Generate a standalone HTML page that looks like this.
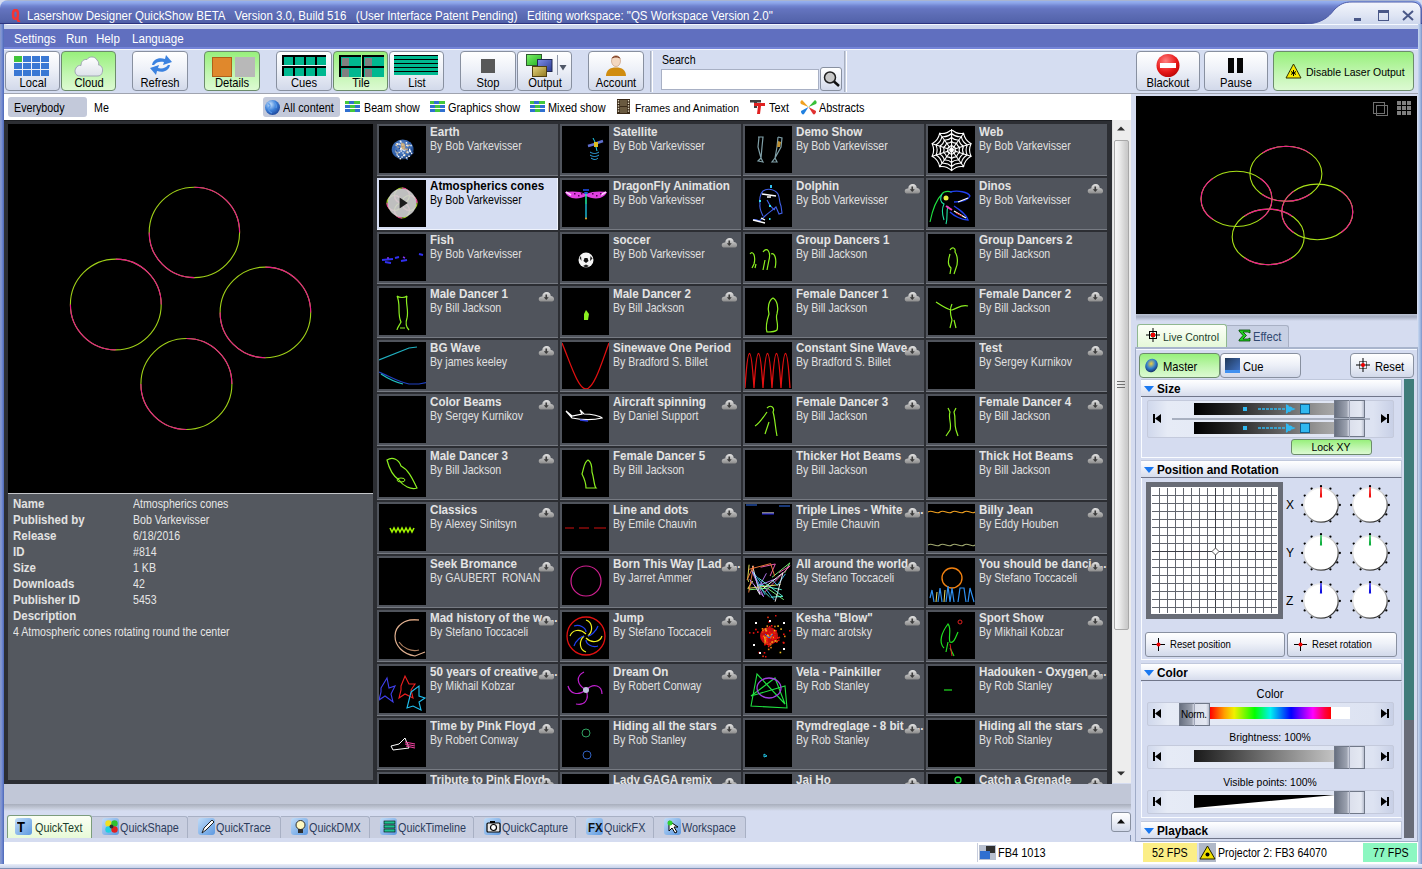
<!DOCTYPE html><html><head><meta charset="utf-8"><style>
*{box-sizing:border-box;margin:0;padding:0}
html,body{width:1422px;height:869px;overflow:hidden;background:#d5dcf0;font-family:"Liberation Sans",sans-serif;font-size:11px;color:#000}
.a{position:absolute}
.t{position:absolute;white-space:pre;line-height:1}
.btn{position:absolute;border:1px solid #8890a0;border-radius:4px;background:linear-gradient(#ffffff,#eef1f8 45%,#d2d9ea);}
.btng{position:absolute;border:1px solid #6c8c6c;border-radius:4px;background:linear-gradient(#98f07c,#c4f6b4 60%,#dcfad2);}
.lbl{position:absolute;left:0;right:0;text-align:center;font-size:11.6px;line-height:1;white-space:pre}
.cell{position:absolute;width:181px;height:52px;background:#50545c;overflow:hidden;border-bottom:1px solid #767a82}
.cell .th{position:absolute;left:2px;top:2px;width:47px;height:47px;background:#000;overflow:hidden}
.cell .ti{position:absolute;left:53px;top:1.97px;font-weight:bold;font-size:12.5px;transform:scaleX(0.928);transform-origin:0 0;color:#e4e4e4;white-space:pre;line-height:1}
.cell .by{position:absolute;left:53px;top:16.73px;font-size:11.9px;transform:scaleX(0.891);transform-origin:0 0;color:#e0e0e0;white-space:pre;line-height:1}
.cell .cl{position:absolute;left:161px;top:5.3px;width:16.5px;height:11px}
.sel{background:#d5ddf2;border-bottom-color:#eef2fc;box-shadow:inset -1px 0 0 #eef2fc}
.sel .ti,.sel .by{color:#000}
.hdr{position:absolute;left:1141px;width:261px;height:18px;border:1px solid #c0c8dc;border-left:none;border-bottom:1px solid #70768a;background:linear-gradient(#ffffff,#f0f3fa 40%,#d6dcec);}
.hdr span{position:absolute;left:15.7px;top:2.93px;font-weight:bold;font-size:12.6px;transform:scaleX(0.936);transform-origin:0 0;white-space:pre;line-height:1}
.hdr i{position:absolute;left:3px;top:6px;width:0;height:0;border-left:5px solid transparent;border-right:5px solid transparent;border-top:6px solid #1a78f0}
.sfr{position:absolute;border:1px solid #c4cadc;border-radius:2px;background:linear-gradient(90deg,#d0d8ec,#e6ebf6 8%,#dde3f2 92%,#c8d0e6)}
</style></head><body><div class="a" style="left:0px;top:0px;width:1422px;height:869px;background:#d5dcf0"></div><div class="a" style="left:0;top:0;width:1422px;height:24px;border-radius:8px 8px 0 0;background:linear-gradient(#a8b4d0 0px,#a8b4d0 1px,#94b0f0 1px,#8ca4e8 3px,#7084d0 6px,#6474c0 9px,#5c6cb4 15px,#5464ac 21px,#4c5ca4 23px,#2c3480 23px,#2c3480 24px)"></div><svg class="a" style="left:1290px;top:0" width="132" height="29"><defs><linearGradient id="wc" x1="0" y1="0" x2="0" y2="1"><stop offset="0" stop-color="#f4f6fc"/><stop offset="0.5" stop-color="#dfe5f4"/><stop offset="1" stop-color="#c4d0ea"/></linearGradient></defs><path d="M0,29 L0,24 L14,24 C30,24 38,18 44,10 C50,4 54,2 62,2 L122,2 C128,2 131,6 131,10 L131,29 Z" fill="url(#wc)" stroke="#4e5ca8" stroke-width="1"/></svg><div class="a" style="left:1354px;top:18px;width:7px;height:3px;background:#4a5888"></div><div class="a" style="left:1378px;top:10px;width:11px;height:11px;border:1px solid #4a5888;border-top-width:3px"></div><svg class="a" style="left:1401px;top:9px" width="14" height="13"><path d="M2,2 L12,11 M12,2 L2,11" stroke="#4a5888" stroke-width="2"/></svg><svg class="a" style="left:11px;top:8px" width="11" height="15"><path d="M4.5,1 C1.5,1 0.8,3 0.8,6.5 C0.8,10 1.5,12 4.5,12 C7.5,12 8.2,10 8.2,6.5 C8.2,3 7.5,1 4.5,1 Z M4.5,3.5 C3.5,3.5 3.3,4.5 3.3,6.5 C3.3,8.5 3.5,9.5 4.5,9.5 C5.5,9.5 5.7,8.5 5.7,6.5 C5.7,4.5 5.5,3.5 4.5,3.5 Z" fill="#f43434" fill-rule="evenodd"/><path d="M4.5,10 L7,10 L9.5,14 L6.5,14 Z" fill="#f43434"/></svg><div class="t" style="left:26.6px;top:9.85px;font-size:12.88px;transform:scaleX(0.8929);transform-origin:0 0;color:#fff">Lasershow Designer QuickShow BETA   Version 3.0, Build 516   (User Interface Patent Pending)   Editing workspace: "QS Workspace Version 2.0"</div><div class="a" style="left:4px;top:24px;width:1414px;height:5px;border-radius:4px 0 0 0;background:linear-gradient(#f4f8ff 0px,#f4f8ff 1px,#ccd6ee 1px,#c8d2ea 5px)"></div><div class="a" style="left:4px;top:29px;width:1414px;height:18px;background:#606fbf"></div><div class="a" style="left:4px;top:47px;width:1414px;height:2px;background:#7484d8"></div><div class="a" style="left:4px;top:49px;width:1414px;height:1px;background:#f4f6fb"></div><div class="t" style="left:14px;top:31.95px;font-size:12.99px;transform:scaleX(0.8929);transform-origin:0 0;color:#fff">Settings</div><div class="t" style="left:66px;top:31.95px;font-size:12.99px;transform:scaleX(0.8929);transform-origin:0 0;color:#fff">Run</div><div class="t" style="left:96px;top:31.95px;font-size:12.99px;transform:scaleX(0.8929);transform-origin:0 0;color:#fff">Help</div><div class="t" style="left:132px;top:31.95px;font-size:12.99px;transform:scaleX(0.8929);transform-origin:0 0;color:#fff">Language</div><div class="a" style="left:0px;top:24px;width:4px;height:840px;background:linear-gradient(90deg,#8c9cc8,#7a90d4 40%,#4c68b8)"></div><div class="a" style="left:1418px;top:24px;width:4px;height:840px;background:linear-gradient(90deg,#c8d8f0,#a0b8e0 60%,#7c90c8)"></div><div class="a" style="left:0px;top:865px;width:1422px;height:4px;background:linear-gradient(#c0cce8,#8898c8)"></div><div class="a" style="left:4px;top:50px;width:1414px;height:43px;background:#d5ddf1"></div><div class="a" style="left:4px;top:93px;width:1414px;height:1px;background:#a0a4b0"></div><div class="btn" style="left:5px;top:51px;width:55px;height:40px"></div><div class="a" style="left:14px;top:56px;width:8px;height:6px;background:#3fc43a"></div><div class="a" style="left:23px;top:56px;width:8px;height:6px;background:#3a78d4"></div><div class="a" style="left:32px;top:56px;width:8px;height:6px;background:#3a78d4"></div><div class="a" style="left:41px;top:56px;width:8px;height:6px;background:#3a78d4"></div><div class="a" style="left:14px;top:63px;width:8px;height:6px;background:#3a78d4"></div><div class="a" style="left:23px;top:63px;width:8px;height:6px;background:#3a78d4"></div><div class="a" style="left:32px;top:63px;width:8px;height:6px;background:#3a78d4"></div><div class="a" style="left:41px;top:63px;width:8px;height:6px;background:#3a78d4"></div><div class="a" style="left:14px;top:70px;width:8px;height:6px;background:#3a78d4"></div><div class="a" style="left:23px;top:70px;width:8px;height:6px;background:#3a78d4"></div><div class="a" style="left:32px;top:70px;width:8px;height:6px;background:#3a78d4"></div><div class="a" style="left:41px;top:70px;width:8px;height:6px;background:#3a78d4"></div><div class="t" style="left:-67.5px;width:200px;text-align:center;top:76.98px;font-size:12.54px;transform:scaleX(0.8929);transform-origin:50% 0;">Local</div><div class="btng" style="left:61px;top:51px;width:55px;height:40px"></div><svg class="a" style="left:74px;top:55px" width="30" height="22"><defs><linearGradient id="cg" x1="0" y1="0" x2="0" y2="1"><stop offset="0" stop-color="#ffffff"/><stop offset="1" stop-color="#dde2ea"/></linearGradient></defs><path d="M6,21 C1,21 0,16 2,13 C3,11 5,10 7,10.5 C7,6 10,4 13,4.5 C15,1 21,1 23,5 C25,7 25,9 24.5,10 C27,10 29,13 28.5,16 C28,20 26,21 23,21 Z" fill="url(#cg)" stroke="#a0a8b4" stroke-width="1"/></svg><div class="t" style="left:-11.5px;width:200px;text-align:center;top:76.98px;font-size:12.54px;transform:scaleX(0.8929);transform-origin:50% 0;">Cloud</div><div class="btn" style="left:132px;top:51px;width:56px;height:40px"></div><svg class="a" style="left:148px;top:53px" width="26" height="24"><path d="M4,12 C5,6 11,4 17,6 L18,2 L24,9 L15,12 L16,9 C12,8 8,9 6,12 Z" fill="#3b82e0"/><path d="M22,12 C21,18 15,20 9,18 L8,22 L2,15 L11,12 L10,15 C14,16 18,15 20,12 Z" fill="#3b82e0"/></svg><div class="t" style="left:60.0px;width:200px;text-align:center;top:76.98px;font-size:12.54px;transform:scaleX(0.8929);transform-origin:50% 0;">Refresh</div><div class="btng" style="left:204px;top:51px;width:56px;height:40px"></div><div class="a" style="left:212px;top:57px;width:20px;height:20px;background:#e0882c;border:1px solid #b06018"></div><div class="a" style="left:235px;top:57px;width:20px;height:20px;background:#b8b8b8"></div><div class="t" style="left:132.0px;width:200px;text-align:center;top:76.98px;font-size:12.54px;transform:scaleX(0.8929);transform-origin:50% 0;">Details</div><div class="btn" style="left:276px;top:51px;width:56px;height:40px"></div><div class="a" style="left:282px;top:55px;width:11px;height:10px;background:#00b890;border-left:2px solid #000;border-top:2px solid #000"></div><div class="a" style="left:293px;top:55px;width:11px;height:10px;background:#00b890;border-left:2px solid #000;border-top:2px solid #000"></div><div class="a" style="left:304px;top:55px;width:11px;height:10px;background:#00b890;border-left:2px solid #000;border-top:2px solid #000"></div><div class="a" style="left:315px;top:55px;width:11px;height:10px;background:#00b890;border-left:2px solid #000;border-top:2px solid #000"></div><div class="a" style="left:282px;top:66px;width:11px;height:10px;background:#00b890;border-left:2px solid #000;border-top:2px solid #000"></div><div class="a" style="left:293px;top:66px;width:11px;height:10px;background:#00b890;border-left:2px solid #000;border-top:2px solid #000"></div><div class="a" style="left:304px;top:66px;width:11px;height:10px;background:#00b890;border-left:2px solid #000;border-top:2px solid #000"></div><div class="a" style="left:315px;top:66px;width:11px;height:10px;background:#00b890;border-left:2px solid #000;border-top:2px solid #000"></div><div class="t" style="left:204.0px;width:200px;text-align:center;top:76.98px;font-size:12.54px;transform:scaleX(0.8929);transform-origin:50% 0;">Cues</div><div class="btng" style="left:333px;top:51px;width:55px;height:40px"></div><div class="a" style="left:339px;top:55px;width:22px;height:11px;background:#00b890;border-left:2px solid #000;border-top:2px solid #000"><div class="a" style="left:1px;top:1px;width:7px;height:8px;background:#808080"></div></div><div class="a" style="left:362px;top:55px;width:22px;height:11px;background:#00b890;border-left:2px solid #000;border-top:2px solid #000"><div class="a" style="left:1px;top:1px;width:7px;height:8px;background:#808080"></div></div><div class="a" style="left:339px;top:66px;width:22px;height:11px;background:#00b890;border-left:2px solid #000;border-top:2px solid #000"><div class="a" style="left:1px;top:1px;width:7px;height:8px;background:#808080"></div></div><div class="a" style="left:362px;top:66px;width:22px;height:11px;background:#00b890;border-left:2px solid #000;border-top:2px solid #000"><div class="a" style="left:1px;top:1px;width:7px;height:8px;background:#808080"></div></div><div class="t" style="left:260.5px;width:200px;text-align:center;top:76.98px;font-size:12.54px;transform:scaleX(0.8929);transform-origin:50% 0;">Tile</div><div class="btn" style="left:389px;top:51px;width:55px;height:40px"></div><div class="a" style="left:394px;top:55px;width:44px;height:4px;background:#00b890;border-top:1px solid #000"></div><div class="a" style="left:394px;top:59px;width:44px;height:4px;background:#00b890;border-top:1px solid #000"></div><div class="a" style="left:394px;top:63px;width:44px;height:4px;background:#00b890;border-top:1px solid #000"></div><div class="a" style="left:394px;top:67px;width:44px;height:4px;background:#00b890;border-top:1px solid #000"></div><div class="a" style="left:394px;top:71px;width:44px;height:4px;background:#00b890;border-top:1px solid #000"></div><div class="t" style="left:316.5px;width:200px;text-align:center;top:76.98px;font-size:12.54px;transform:scaleX(0.8929);transform-origin:50% 0;">List</div><div class="btn" style="left:460px;top:51px;width:56px;height:40px"></div><div class="a" style="left:481px;top:59px;width:14px;height:14px;background:#585858"></div><div class="t" style="left:388.0px;width:200px;text-align:center;top:76.98px;font-size:12.54px;transform:scaleX(0.8929);transform-origin:50% 0;">Stop</div><div class="btn" style="left:517px;top:51px;width:55px;height:40px"></div><svg class="a" style="left:525px;top:53px" width="45" height="26"><defs><linearGradient id="og1" x1="0" y1="0" x2="1" y2="1"><stop offset="0" stop-color="#7ef06a"/><stop offset="1" stop-color="#20b020"/></linearGradient><linearGradient id="og2" x1="0" y1="0" x2="1" y2="1"><stop offset="0" stop-color="#8090e8"/><stop offset="1" stop-color="#283890"/></linearGradient><linearGradient id="og3" x1="0" y1="0" x2="1" y2="1"><stop offset="0" stop-color="#e8d880"/><stop offset="1" stop-color="#907820"/></linearGradient></defs><rect x="1.5" y="1.5" width="15" height="11" fill="url(#og1)" stroke="#305830"/><rect x="12.5" y="6.5" width="14.5" height="12" fill="url(#og2)" stroke="#202850"/><rect x="7.5" y="13.5" width="14" height="10" fill="url(#og3)" stroke="#504010"/><line x1="32.5" y1="2" x2="32.5" y2="22" stroke="#9098a8"/><path d="M34.5,12 L41.5,12 L38,17.5 Z" fill="#505868"/></svg><div class="t" style="left:444.5px;width:200px;text-align:center;top:76.98px;font-size:12.54px;transform:scaleX(0.8929);transform-origin:50% 0;">Output</div><div class="btn" style="left:588px;top:51px;width:56px;height:40px"></div><svg class="a" style="left:604px;top:53px" width="24" height="24"><ellipse cx="12" cy="8" rx="4.5" ry="5.5" fill="#f4d8c0" stroke="#c09070" stroke-width="0.6"/><path d="M7.5,6 C8,2 16,2 16.5,6 C15,4 9,4 7.5,6 Z" fill="#7a3a20"/><path d="M2,23 C2,17 6,14.5 12,14.5 C18,14.5 22,17 22,23 Z" fill="#d08c10"/></svg><div class="t" style="left:516.0px;width:200px;text-align:center;top:76.98px;font-size:12.54px;transform:scaleX(0.8929);transform-origin:50% 0;">Account</div><div class="a" style="left:650px;top:51px;width:3px;height:41px;border-left:1px solid #a8b0c0;border-right:1px solid #ffffff;background:#c8d0e0"></div><div class="a" style="left:844px;top:51px;width:3px;height:41px;border-left:1px solid #a8b0c0;border-right:1px solid #ffffff;background:#c8d0e0"></div><div class="t" style="left:661.5px;top:54.75px;font-size:11.87px;transform:scaleX(0.8929);transform-origin:0 0;">Search</div><div class="a" style="left:661px;top:69px;width:158px;height:21px;background:#fff;border:1px solid #a8b0c4"></div><div class="btn" style="left:820px;top:67px;width:22px;height:24px;border-radius:3px"></div><svg class="a" style="left:822px;top:70px" width="19" height="18"><circle cx="8" cy="7.5" r="5.5" fill="#c8c8c8" stroke="#202020" stroke-width="1.5"/><path d="M12,11.5 L17,16" stroke="#101010" stroke-width="2.5"/></svg><div class="btn" style="left:1136px;top:51px;width:64px;height:40px"></div><svg class="a" style="left:1155px;top:53px" width="26" height="25"><defs><radialGradient id="bo" cx="0.4" cy="0.3" r="0.8"><stop offset="0" stop-color="#ff8080"/><stop offset="0.6" stop-color="#e81818"/><stop offset="1" stop-color="#b00000"/></radialGradient></defs><circle cx="13" cy="12.5" r="11.5" fill="url(#bo)"/><rect x="5" y="10" width="16" height="5" fill="#fff"/></svg><div class="t" style="left:1068.0px;width:200px;text-align:center;top:76.98px;font-size:12.54px;transform:scaleX(0.8929);transform-origin:50% 0;">Blackout</div><div class="btn" style="left:1204px;top:51px;width:64px;height:40px"></div><svg class="a" style="left:1227px;top:57px" width="18" height="17"><defs><linearGradient id="pz" x1="0" y1="0" x2="1" y2="0"><stop offset="0" stop-color="#000"/><stop offset="0.5" stop-color="#404040"/><stop offset="1" stop-color="#000"/></linearGradient></defs><path d="M1,1 L7,1 L7,16 L1,16 Z M10,1 L16,1 L16,16 L10,16 Z" fill="#050505"/></svg><div class="t" style="left:1136.0px;width:200px;text-align:center;top:76.98px;font-size:12.54px;transform:scaleX(0.8929);transform-origin:50% 0;">Pause</div><div class="btng" style="left:1273px;top:51px;width:141px;height:40px"></div><svg class="a" style="left:1285px;top:63px" width="17" height="16"><path d="M8.5,1 L16,15 L1,15 Z" fill="#f8e800" stroke="#303000" stroke-width="1"/><path d="M8.5,7 L8.5,13 M6,8.5 L11,11.5 M11,8.5 L6,11.5" stroke="#000" stroke-width="1"/></svg><div class="t" style="left:1305.5px;top:66.00px;font-size:11.76px;transform:scaleX(0.8929);transform-origin:0 0;">Disable Laser Output</div><div class="a" style="left:4px;top:94px;width:1127px;height:26px;background:#fff"></div><div class="a" style="left:8px;top:97px;width:79px;height:20px;background:#c3c9da;border-radius:3px"></div><div class="t" style="left:13.5px;top:102.01px;font-size:11.98px;transform:scaleX(0.8929);transform-origin:0 0;">Everybody</div><div class="t" style="left:94px;top:102.01px;font-size:11.98px;transform:scaleX(0.8929);transform-origin:0 0;">Me</div><div class="a" style="left:263px;top:97px;width:77px;height:20px;background:#c3c9da;border-radius:3px"></div><svg class="a" style="left:264px;top:99px" width="17" height="17"><defs><radialGradient id="gl" cx="0.35" cy="0.3" r="0.8"><stop offset="0" stop-color="#c8e4ff"/><stop offset="0.5" stop-color="#3c80d8"/><stop offset="1" stop-color="#183c90"/></radialGradient></defs><circle cx="8.5" cy="8.5" r="7.5" fill="url(#gl)"/><path d="M4,5 C6,4 7,7 5,9 C4,11 6,13 8,14 M10,3 C12,5 13,6 12,9" stroke="#5898e8" stroke-width="1.2" fill="none"/></svg><div class="t" style="left:283px;top:102.01px;font-size:12.21px;transform:scaleX(0.8929);transform-origin:0 0;">All content</div><svg class="a" style="left:345px;top:101px" width="15" height="11"><rect x="0" y="0" width="15" height="3" fill="#44c83c"/><rect x="4" y="0" width="5" height="3" fill="#3070d0"/><rect x="0" y="4" width="15" height="3" fill="#3070d0"/><rect x="5" y="4" width="5" height="3" fill="#44c83c"/><rect x="0" y="8" width="15" height="3" fill="#3070d0"/><rect x="5" y="8" width="5" height="3" fill="#44c83c"/></svg><div class="t" style="left:363.6px;top:102.01px;font-size:11.98px;transform:scaleX(0.8929);transform-origin:0 0;">Beam show</div><svg class="a" style="left:430px;top:101px" width="15" height="11"><rect x="0" y="0" width="15" height="3" fill="#44c83c"/><rect x="4" y="0" width="5" height="3" fill="#3070d0"/><rect x="0" y="4" width="15" height="3" fill="#3070d0"/><rect x="5" y="4" width="5" height="3" fill="#44c83c"/><rect x="0" y="8" width="15" height="3" fill="#3070d0"/><rect x="5" y="8" width="5" height="3" fill="#44c83c"/></svg><div class="t" style="left:448px;top:102.01px;font-size:12.21px;transform:scaleX(0.8929);transform-origin:0 0;">Graphics show</div><svg class="a" style="left:530px;top:101px" width="15" height="11"><rect x="0" y="0" width="15" height="3" fill="#44c83c"/><rect x="4" y="0" width="5" height="3" fill="#3070d0"/><rect x="0" y="4" width="15" height="3" fill="#3070d0"/><rect x="5" y="4" width="5" height="3" fill="#44c83c"/><rect x="0" y="8" width="15" height="3" fill="#3070d0"/><rect x="5" y="8" width="5" height="3" fill="#44c83c"/></svg><div class="t" style="left:548px;top:102.01px;font-size:12.21px;transform:scaleX(0.8929);transform-origin:0 0;">Mixed show</div><svg class="a" style="left:617px;top:99px" width="13" height="15"><rect x="0" y="0" width="13" height="15" fill="#3a2a18"/><rect x="3" y="1" width="7" height="6" fill="#6a5a40"/><rect x="3" y="8" width="7" height="6" fill="#6a5a40"/><rect x="0.8" y="1.0" width="1.4" height="1.4" fill="#e0d8c0"/><rect x="10.8" y="1.0" width="1.4" height="1.4" fill="#e0d8c0"/><rect x="0.8" y="3.6" width="1.4" height="1.4" fill="#e0d8c0"/><rect x="10.8" y="3.6" width="1.4" height="1.4" fill="#e0d8c0"/><rect x="0.8" y="6.2" width="1.4" height="1.4" fill="#e0d8c0"/><rect x="10.8" y="6.2" width="1.4" height="1.4" fill="#e0d8c0"/><rect x="0.8" y="8.8" width="1.4" height="1.4" fill="#e0d8c0"/><rect x="10.8" y="8.8" width="1.4" height="1.4" fill="#e0d8c0"/><rect x="0.8" y="11.4" width="1.4" height="1.4" fill="#e0d8c0"/><rect x="10.8" y="11.4" width="1.4" height="1.4" fill="#e0d8c0"/></svg><div class="t" style="left:634.5px;top:101.99px;font-size:11.65px;transform:scaleX(0.8929);transform-origin:0 0;">Frames and Animation</div><svg class="a" style="left:749px;top:99px" width="17" height="16"><path d="M1,1 L12,1 L12,3.5 L8,3.5 L8,9 L5,9 L5,3.5 L1,3.5 Z" fill="#404040"/><path d="M5,4 L16,4 L16,7 L12,7 L11,15 L8,15 L9,7 L5,7 Z" fill="#e02020"/></svg><div class="t" style="left:769px;top:102.01px;font-size:12.21px;transform:scaleX(0.8929);transform-origin:0 0;">Text</div><svg class="a" style="left:800px;top:99px" width="17" height="16"><path d="M8.5,8 L2,1 C0,2 0,4 1,5 Z" fill="#f0a020"/><path d="M8.5,8 L15,1 C17,2 17,4 16,5 Z" fill="#38c038"/><path d="M8.5,8 L1,12 C1,15 3,16 4,15 Z" fill="#2080e0"/><path d="M8.5,8 L16,12 C16,15 14,16 13,15 Z" fill="#e03030"/></svg><div class="t" style="left:818.5px;top:102.01px;font-size:12.21px;transform:scaleX(0.8929);transform-origin:0 0;">Abstracts</div><div class="a" style="left:4px;top:120px;width:1108px;height:664px;background:#2c2e33"></div><div class="a" style="left:4px;top:120px;width:1108px;height:1px;background:#1c1e22"></div><div class="a" style="left:8px;top:124px;width:365px;height:369px;background:#000"></div><svg class="a" style="left:8px;top:124px" width="365" height="369"><circle cx="186.4" cy="108.4" r="45.2" fill="none" stroke="#a0d018" stroke-width="1.1" /><circle cx="186.4" cy="108.4" r="45.2" fill="none" stroke="#e8188c" stroke-width="1.1" pathLength="400" stroke-dasharray="100 100" stroke-dashoffset="-100"/><circle cx="107.8" cy="180.5" r="45.4" fill="none" stroke="#a0d018" stroke-width="1.1" /><circle cx="107.8" cy="180.5" r="45.4" fill="none" stroke="#e8188c" stroke-width="1.1" pathLength="400" stroke-dasharray="100 100" stroke-dashoffset="-100"/><circle cx="257.4" cy="188.4" r="45.3" fill="none" stroke="#a0d018" stroke-width="1.1" /><circle cx="257.4" cy="188.4" r="45.3" fill="none" stroke="#e8188c" stroke-width="1.1" pathLength="400" stroke-dasharray="100 100" stroke-dashoffset="-100"/><circle cx="178.4" cy="260" r="45.5" fill="none" stroke="#a0d018" stroke-width="1.1" /><circle cx="178.4" cy="260" r="45.5" fill="none" stroke="#e8188c" stroke-width="1.1" pathLength="400" stroke-dasharray="100 100" stroke-dashoffset="-100"/></svg><div class="a" style="left:8px;top:493px;width:365px;height:1px;background:#c4c6ca"></div><div class="a" style="left:8px;top:494px;width:365px;height:286px;background:#54585f"></div><div class="t" style="left:12.8px;top:497.85px;font-size:12.88px;transform:scaleX(0.8929);transform-origin:0 0;font-weight:bold;color:#e2e2e2">Name</div><div class="t" style="left:132.5px;top:498.75px;font-size:11.87px;transform:scaleX(0.8929);transform-origin:0 0;color:#e6e6e6">Atmospherics cones</div><div class="t" style="left:12.8px;top:513.85px;font-size:12.88px;transform:scaleX(0.8929);transform-origin:0 0;font-weight:bold;color:#e2e2e2">Published by</div><div class="t" style="left:132.5px;top:514.75px;font-size:11.87px;transform:scaleX(0.8929);transform-origin:0 0;color:#e6e6e6">Bob Varkevisser</div><div class="t" style="left:12.8px;top:529.85px;font-size:12.88px;transform:scaleX(0.8929);transform-origin:0 0;font-weight:bold;color:#e2e2e2">Release</div><div class="t" style="left:132.5px;top:530.75px;font-size:11.87px;transform:scaleX(0.8929);transform-origin:0 0;color:#e6e6e6">6/18/2016</div><div class="t" style="left:12.8px;top:545.85px;font-size:12.88px;transform:scaleX(0.8929);transform-origin:0 0;font-weight:bold;color:#e2e2e2">ID</div><div class="t" style="left:132.5px;top:546.75px;font-size:11.87px;transform:scaleX(0.8929);transform-origin:0 0;color:#e6e6e6">#814</div><div class="t" style="left:12.8px;top:561.85px;font-size:12.88px;transform:scaleX(0.8929);transform-origin:0 0;font-weight:bold;color:#e2e2e2">Size</div><div class="t" style="left:132.5px;top:562.75px;font-size:11.87px;transform:scaleX(0.8929);transform-origin:0 0;color:#e6e6e6">1 KB</div><div class="t" style="left:12.8px;top:577.85px;font-size:12.88px;transform:scaleX(0.8929);transform-origin:0 0;font-weight:bold;color:#e2e2e2">Downloads</div><div class="t" style="left:132.5px;top:578.75px;font-size:11.87px;transform:scaleX(0.8929);transform-origin:0 0;color:#e6e6e6">42</div><div class="t" style="left:12.8px;top:593.85px;font-size:12.88px;transform:scaleX(0.8929);transform-origin:0 0;font-weight:bold;color:#e2e2e2">Publisher ID</div><div class="t" style="left:132.5px;top:594.75px;font-size:11.87px;transform:scaleX(0.8929);transform-origin:0 0;color:#e6e6e6">5453</div><div class="t" style="left:12.8px;top:609.85px;font-size:12.88px;transform:scaleX(0.8929);transform-origin:0 0;font-weight:bold;color:#e2e2e2">Description</div><div class="t" style="left:12.8px;top:626.75px;font-size:11.87px;transform:scaleX(0.8929);transform-origin:0 0;color:#e6e6e6">4 Atmospheric cones rotating round the center</div><div class="a" style="left:377px;top:124px;width:735px;height:660px;overflow:hidden"><div class="cell" style="left:0px;top:0px"><div class="th"><svg width="47" height="47"><defs><radialGradient id="eg" cx="0.45" cy="0.4" r="0.6"><stop offset="0" stop-color="#6890d0"/><stop offset="0.8" stop-color="#3060a8"/><stop offset="1" stop-color="#182848"/></radialGradient></defs><ellipse cx="23.7" cy="23.5" rx="11" ry="10" fill="url(#eg)"/><rect x="16.6" y="25.6" width="1.5" height="1.5" fill="#f0e0c0"/><rect x="16.8" y="24.9" width="1.5" height="1.5" fill="#3060b0"/><rect x="27.0" y="31.4" width="1.5" height="1.5" fill="#d0b080"/><rect x="17.6" y="17.3" width="1.5" height="1.5" fill="#ffffff"/><rect x="20.2" y="24.7" width="1.5" height="1.5" fill="#3060b0"/><rect x="26.7" y="16.1" width="1.5" height="1.5" fill="#ffffff"/><rect x="18.5" y="20.1" width="1.5" height="1.5" fill="#d0b080"/><rect x="19.3" y="17.4" width="1.5" height="1.5" fill="#e8eef8"/><rect x="17.2" y="17.4" width="1.5" height="1.5" fill="#ffffff"/><rect x="27.7" y="25.0" width="1.5" height="1.5" fill="#e8eef8"/><rect x="16.6" y="18.6" width="1.5" height="1.5" fill="#c8d8f0"/><rect x="15.2" y="26.7" width="1.5" height="1.5" fill="#3060b0"/><rect x="24.3" y="28.6" width="1.5" height="1.5" fill="#ffffff"/><rect x="20.2" y="18.0" width="1.5" height="1.5" fill="#c8d8f0"/><rect x="17.5" y="27.4" width="1.5" height="1.5" fill="#f0e0c0"/><rect x="28.1" y="25.9" width="1.5" height="1.5" fill="#f0e0c0"/><rect x="24.4" y="28.6" width="1.5" height="1.5" fill="#ffffff"/><rect x="20.7" y="22.3" width="1.5" height="1.5" fill="#ffffff"/><rect x="27.2" y="18.6" width="1.5" height="1.5" fill="#ffffff"/><rect x="23.8" y="23.3" width="1.5" height="1.5" fill="#e8eef8"/><rect x="25.7" y="22.5" width="1.5" height="1.5" fill="#d0b080"/><rect x="29.9" y="22.8" width="1.5" height="1.5" fill="#ffffff"/><rect x="19.6" y="21.8" width="1.5" height="1.5" fill="#204890"/><rect x="23.3" y="26.3" width="1.5" height="1.5" fill="#c8d8f0"/><rect x="30.1" y="24.1" width="1.5" height="1.5" fill="#ffffff"/><rect x="29.3" y="29.5" width="1.5" height="1.5" fill="#ffffff"/><rect x="32.0" y="26.6" width="1.5" height="1.5" fill="#e8eef8"/><rect x="21.9" y="19.7" width="1.5" height="1.5" fill="#3060b0"/><rect x="26.8" y="31.1" width="1.5" height="1.5" fill="#e8eef8"/><rect x="18.3" y="26.4" width="1.5" height="1.5" fill="#d0b080"/><rect x="19.7" y="25.6" width="1.5" height="1.5" fill="#c8d8f0"/><rect x="30.2" y="16.4" width="1.5" height="1.5" fill="#3060b0"/><rect x="20.6" y="31.9" width="1.5" height="1.5" fill="#e8eef8"/><rect x="27.5" y="32.3" width="1.5" height="1.5" fill="#3060b0"/><rect x="21.7" y="21.2" width="1.5" height="1.5" fill="#e8eef8"/><rect x="24.9" y="28.2" width="1.5" height="1.5" fill="#f0e0c0"/><rect x="16.7" y="18.0" width="1.5" height="1.5" fill="#d0b080"/><rect x="26.4" y="24.8" width="1.5" height="1.5" fill="#3060b0"/><rect x="22.9" y="22.6" width="1.5" height="1.5" fill="#c8d8f0"/><rect x="19.1" y="28.1" width="1.5" height="1.5" fill="#3060b0"/><rect x="16.2" y="24.2" width="1.5" height="1.5" fill="#f0e0c0"/><rect x="17.7" y="28.4" width="1.5" height="1.5" fill="#c8d8f0"/><rect x="31.3" y="18.8" width="1.5" height="1.5" fill="#e8eef8"/><rect x="23.1" y="19.8" width="1.5" height="1.5" fill="#204890"/><rect x="27.8" y="22.0" width="1.5" height="1.5" fill="#d0b080"/><rect x="29.4" y="18.5" width="1.5" height="1.5" fill="#d0b080"/><rect x="26.8" y="24.4" width="1.5" height="1.5" fill="#3060b0"/><rect x="28.4" y="22.4" width="1.5" height="1.5" fill="#204890"/><rect x="18.7" y="27.4" width="1.5" height="1.5" fill="#3060b0"/><rect x="16.5" y="23.9" width="1.5" height="1.5" fill="#204890"/><rect x="27.2" y="23.0" width="1.5" height="1.5" fill="#d0b080"/><rect x="15.1" y="20.3" width="1.5" height="1.5" fill="#3060b0"/><rect x="27.8" y="25.5" width="1.5" height="1.5" fill="#e8eef8"/><rect x="23.7" y="21.0" width="1.5" height="1.5" fill="#d0b080"/><rect x="21.4" y="24.3" width="1.5" height="1.5" fill="#e8eef8"/><rect x="22.3" y="30.3" width="1.5" height="1.5" fill="#e8eef8"/><rect x="26.8" y="25.4" width="1.5" height="1.5" fill="#d0b080"/><rect x="31.7" y="22.6" width="1.5" height="1.5" fill="#204890"/><rect x="14.1" y="22.2" width="1.5" height="1.5" fill="#3060b0"/><rect x="25.0" y="23.8" width="1.5" height="1.5" fill="#c8d8f0"/><rect x="20.7" y="14.6" width="1.5" height="1.5" fill="#ffffff"/><rect x="21.5" y="22.0" width="1.5" height="1.5" fill="#ffffff"/><rect x="23.0" y="18.2" width="1.5" height="1.5" fill="#ffffff"/><rect x="30.3" y="26.7" width="1.5" height="1.5" fill="#204890"/><rect x="33.0" y="26.0" width="1.5" height="1.5" fill="#204890"/><rect x="21.2" y="15.4" width="1.5" height="1.5" fill="#c8d8f0"/><rect x="18.8" y="29.8" width="1.5" height="1.5" fill="#ffffff"/><rect x="28.1" y="19.1" width="1.5" height="1.5" fill="#f0e0c0"/><rect x="30.6" y="24.8" width="1.5" height="1.5" fill="#ffffff"/><rect x="19.3" y="19.3" width="1.5" height="1.5" fill="#3060b0"/><path d="M22,17 C25,16 27,19 26,22 C25,25 23,24 22,21 Z" fill="#d8b070" opacity="0.8"/></svg></div><div class="ti">Earth</div><div class="by">By Bob Varkevisser</div></div><div class="cell" style="left:183px;top:0px"><div class="th"><svg width="47" height="47"><path d="M26,20 L33,18 M35,17 L41,15" stroke="#6070d0" stroke-width="2.5"/><rect x="32" y="16" width="4" height="5" fill="#e0c020"/><path d="M31,12 L33,16 M34,21 L35,25" stroke="#20d0f0" stroke-width="1"/><path d="M28,26 C31,28 34,28 37,26 M28,29 C31,31 34,31 37,29 M29,32 C32,34 34,34 36,32" stroke="#30a8e8" stroke-width="1" fill="none"/></svg></div><div class="ti">Satellite</div><div class="by">By Bob Varkevisser</div></div><div class="cell" style="left:366px;top:0px"><div class="th"><svg width="47" height="47"><path d="M14,11 L13,21 L16,32 L13,35 L18,36 L16,32 M13,11 L18,11 L17,21 L16,32" stroke="#80a0a8" stroke-width="1.2" fill="none"/><path d="M33,11 L32,21 L30,32 L27,36 L32,36 L30,32 M33,11 L37,12 L36,21 L30,32" stroke="#80a0a8" stroke-width="1.2" fill="none"/><path d="M33,15 L36,16 L35,21 L32,21 Z" fill="#c09030"/></svg></div><div class="ti">Demo Show</div><div class="by">By Bob Varkevisser</div></div><div class="cell" style="left:549px;top:0px"><div class="th"><svg width="47" height="47"><path d="M23.6,24.0 L23.6,3.0 M23.6,24.0 L35.9,7.0 M23.6,24.0 L43.6,17.5 M23.6,24.0 L43.6,30.5 M23.6,24.0 L35.9,41.0 M23.6,24.0 L23.6,45.0 M23.6,24.0 L11.3,41.0 M23.6,24.0 L3.6,30.5 M23.6,24.0 L3.6,17.5 M23.6,24.0 L11.3,7.0 M23.6,19.5 Q24.7,20.6 26.2,20.4 Q26.5,21.9 27.9,22.6 Q27.2,24.0 27.9,25.4 Q26.5,26.1 26.2,27.6 Q24.7,27.4 23.6,28.5 Q22.5,27.4 21.0,27.6 Q20.7,26.1 19.3,25.4 Q20.0,24.0 19.3,22.6 Q20.7,21.9 21.0,20.4 Q22.5,20.6 23.6,19.5 M23.6,15.5 Q25.7,17.5 28.6,17.1 Q29.1,20.0 31.7,21.4 Q30.4,24.0 31.7,26.6 Q29.1,28.0 28.6,30.9 Q25.7,30.5 23.6,32.5 Q21.5,30.5 18.6,30.9 Q18.1,28.0 15.5,26.6 Q16.8,24.0 15.5,21.4 Q18.1,20.0 18.6,17.1 Q21.5,17.5 23.6,15.5 M23.6,11.5 Q26.7,14.5 30.9,13.9 Q31.7,18.1 35.5,20.1 Q33.6,24.0 35.5,27.9 Q31.7,29.9 30.9,34.1 Q26.7,33.5 23.6,36.5 Q20.5,33.5 16.3,34.1 Q15.5,29.9 11.7,27.9 Q13.6,24.0 11.7,20.1 Q15.5,18.1 16.3,13.9 Q20.5,14.5 23.6,11.5 M23.6,7.5 Q27.7,11.4 33.3,10.7 Q34.3,16.2 39.3,18.9 Q36.8,24.0 39.3,29.1 Q34.3,31.8 33.3,37.3 Q27.7,36.6 23.6,40.5 Q19.5,36.6 13.9,37.3 Q12.9,31.8 7.9,29.1 Q10.4,24.0 7.9,18.9 Q12.9,16.2 13.9,10.7 Q19.5,11.4 23.6,7.5 M23.6,3.5 Q28.7,8.4 35.6,7.4 Q36.9,14.4 43.1,17.7 Q40.0,24.0 43.1,30.3 Q36.9,33.6 35.6,40.6 Q28.7,39.6 23.6,44.5 Q18.5,39.6 11.6,40.6 Q10.3,33.6 4.1,30.3 Q7.2,24.0 4.1,17.7 Q10.3,14.4 11.6,7.4 Q18.5,8.4 23.6,3.5 " stroke="#fff" stroke-width="1.1" fill="none"/></svg></div><div class="ti">Web</div><div class="by">By Bob Varkevisser</div></div><div class="cell sel" style="left:0px;top:54px"><div class="th"><svg width="47" height="47"><g fill="none" stroke-width="1.2"><circle cx="23" cy="15.5" r="7.5" stroke="#a0d020"/><circle cx="23" cy="15.5" r="7.5" stroke="#f030a0" pathLength="400" stroke-dasharray="100 100" stroke-dashoffset="-100"/><circle cx="15.5" cy="23" r="7.5" stroke="#a0d020"/><circle cx="15.5" cy="23" r="7.5" stroke="#f030a0" pathLength="400" stroke-dasharray="100 100" stroke-dashoffset="-100"/><circle cx="30.5" cy="23" r="7.5" stroke="#a0d020"/><circle cx="30.5" cy="23" r="7.5" stroke="#f030a0" pathLength="400" stroke-dasharray="100 100" stroke-dashoffset="-100"/><circle cx="23" cy="30.5" r="7.5" stroke="#a0d020"/><circle cx="23" cy="30.5" r="7.5" stroke="#f030a0" pathLength="400" stroke-dasharray="100 100" stroke-dashoffset="-100"/></g><circle cx="23" cy="23" r="14.3" fill="#d4d4d4" fill-opacity="0.9"/><path d="M20.6,17.4 L28.7,23 L20.6,28.6 Z" fill="#1c1c1c"/></svg></div><div class="ti">Atmospherics cones</div><div class="by">By Bob Varkevisser</div></div><div class="cell" style="left:183px;top:54px"><div class="th"><svg width="47" height="47"><path d="M24,14 C18,11 9,11 3,12 C4,15 7,17 10,18 C15,19 20,18 24,16 Z M24,14 C30,11 39,11 45,12 C44,15 41,17 38,18 C33,19 28,18 24,16 Z" fill="#e040e0"/><path d="M4,12 L9,15 M44,12 L39,15" stroke="#ffd0ff" stroke-width="1.5"/><g fill="#500050"><rect x="12" y="13" width="1.5" height="1.5"/><rect x="16" y="15" width="1.5" height="1.5"/><rect x="19" y="13" width="1.5" height="1.5"/><rect x="30" y="13" width="1.5" height="1.5"/><rect x="34" y="15" width="1.5" height="1.5"/><rect x="38" y="13" width="1.5" height="1.5"/></g><path d="M24,12 L24,24" stroke="#20f0a0" stroke-width="1.5"/><path d="M24,24 L24,39" stroke="#20d0f0" stroke-width="1.3"/><path d="M21,10 L27,10 M22,13 L26,13" stroke="#2050f0" stroke-width="1.5"/><circle cx="24" cy="38.5" r="1" fill="#f0a020"/></svg></div><div class="ti">DragonFly Animation</div><div class="by">By Bob Varkevisser</div></div><div class="cell" style="left:366px;top:54px"><div class="th"><svg width="47" height="47"><g fill="none" stroke="#4060e8" stroke-width="1.1"><path d="M18,11 C22,8 30,9 33,14 C35,18 34,22 36,26 L37,33 L34,34 L31,27 C28,30 24,32 20,36 C18,38 16,40 14,41 C12,40 10,39 8,40"/><path d="M18,11 C15,14 14,20 15,24 C14,28 16,32 18,36"/><path d="M22,20 C24,24 26,28 30,30"/></g><path d="M17,14 L31,16 M22,17 L26,17" stroke="#ffffff" stroke-width="1.3"/><path d="M8,40 C12,41 16,42 20,43 M16,38 L20,40" stroke="#ffffff" stroke-width="1.3" fill="none"/><rect x="25" y="5" width="2" height="3" fill="#30c0f0"/><rect x="14" y="20" width="2" height="2" fill="#30e0f0"/><rect x="24" y="25" width="2" height="2" fill="#30e0f0"/><rect x="24" y="38" width="1.5" height="2" fill="#30e0f0"/></svg></div><div class="ti">Dolphin</div><div class="by">By Bob Varkevisser</div><svg class="cl" viewBox="0 0 16 11"><defs><linearGradient id="clg" x1="0" y1="0" x2="0" y2="1"><stop offset="0" stop-color="#e4e4e4"/><stop offset="1" stop-color="#8c8c8c"/></linearGradient></defs><path d="M3,10.5 C0.5,10.5 0,8 1,6.5 C2,5.5 3,5.5 4,5.5 C4,2.5 6,1 8.5,1 C11,1 12.5,3 12.5,5 C14.5,5 16,6.5 15.8,8.5 C15.6,10 14.5,10.5 13,10.5 Z" fill="url(#clg)"/><path d="M7.2,3.5 L8.8,3.5 L8.8,6.3 L10.5,6.3 L8,9 L5.5,6.3 L7.2,6.3 Z" fill="#3c3c3c"/></svg></div><div class="cell" style="left:549px;top:54px"><div class="th"><svg width="47" height="47"><path d="M2,42 C4,32 8,20 14,14 C16,11 20,11 24,12" stroke="#20e040" stroke-width="1.1" fill="none"/><path d="M14,14 C12,18 12,22 16,24 C14,28 14,34 16,40 M20,26 C18,32 20,38 18,44" stroke="#20e0a0" stroke-width="1.1" fill="none"/><path d="M22,12 C30,10 40,12 42,16 C40,20 34,22 26,22 M26,26 C32,30 38,34 40,40 C34,40 26,36 22,32" stroke="#2040f0" stroke-width="1.3" fill="none"/><circle cx="18" cy="18" r="2.5" fill="#e8f040"/><path d="M18,26 L24,30" stroke="#f040c0" stroke-width="2"/><path d="M26,31 L38,38 M30,22 L40,18" stroke="#fff" stroke-width="1.3"/><path d="M28,33 L34,36" stroke="#f02020" stroke-width="1"/></svg></div><div class="ti">Dinos</div><div class="by">By Bob Varkevisser</div><svg class="cl" viewBox="0 0 16 11"><defs><linearGradient id="clg" x1="0" y1="0" x2="0" y2="1"><stop offset="0" stop-color="#e4e4e4"/><stop offset="1" stop-color="#8c8c8c"/></linearGradient></defs><path d="M3,10.5 C0.5,10.5 0,8 1,6.5 C2,5.5 3,5.5 4,5.5 C4,2.5 6,1 8.5,1 C11,1 12.5,3 12.5,5 C14.5,5 16,6.5 15.8,8.5 C15.6,10 14.5,10.5 13,10.5 Z" fill="url(#clg)"/><path d="M7.2,3.5 L8.8,3.5 L8.8,6.3 L10.5,6.3 L8,9 L5.5,6.3 L7.2,6.3 Z" fill="#3c3c3c"/></svg></div><div class="cell" style="left:0px;top:108px"><div class="th"><svg width="47" height="47"><path d="M3,26 L14,25 M16,24 L20,23 M22,27 L28,26 M40,20 L44,21 M6,28 L12,29" stroke="#3030f0" stroke-width="2"/><path d="M8,24 L10,24 M24,23 L26,24" stroke="#8030f0" stroke-width="1.5"/></svg></div><div class="ti">Fish</div><div class="by">By Bob Varkevisser</div></div><div class="cell" style="left:183px;top:108px"><div class="th"><svg width="47" height="47"><circle cx="24" cy="26" r="7.5" fill="#f4f4f4"/><path d="M22.5,24 L25.5,24 L26.5,27 L24,29 L21.5,27 Z" fill="#101010"/><path d="M17.5,24 L19,22 L19.5,27 Z M28.5,22 L30.5,24.5 L28,27 Z M21,32 L24,33.5 L27,32 L24,30.5 Z" fill="#202020"/></svg></div><div class="ti">soccer</div><div class="by">By Bob Varkevisser</div><svg class="cl" viewBox="0 0 16 11"><defs><linearGradient id="clg" x1="0" y1="0" x2="0" y2="1"><stop offset="0" stop-color="#e4e4e4"/><stop offset="1" stop-color="#8c8c8c"/></linearGradient></defs><path d="M3,10.5 C0.5,10.5 0,8 1,6.5 C2,5.5 3,5.5 4,5.5 C4,2.5 6,1 8.5,1 C11,1 12.5,3 12.5,5 C14.5,5 16,6.5 15.8,8.5 C15.6,10 14.5,10.5 13,10.5 Z" fill="url(#clg)"/><path d="M7.2,3.5 L8.8,3.5 L8.8,6.3 L10.5,6.3 L8,9 L5.5,6.3 L7.2,6.3 Z" fill="#3c3c3c"/></svg></div><div class="cell" style="left:366px;top:108px"><div class="th"><svg width="47" height="47"><path d="M5,20 C8,16 11,22 9,30 L7,34 M11,30 L10,34" stroke="#8cf020" stroke-width="1.2" fill="none"/><path d="M18,18 C22,12 26,18 24,26 L22,36 M20,26 L18,36 M26,20 C30,18 32,26 30,34" stroke="#8cf020" stroke-width="1.2" fill="none"/></svg></div><div class="ti">Group Dancers 1</div><div class="by">By Bill Jackson</div></div><div class="cell" style="left:549px;top:108px"><div class="th"><svg width="47" height="47"><path d="M22,16 C24,12 28,14 27,18 C30,22 30,30 28,34 L26,40 M22,20 C20,26 20,32 23,34 L22,40" stroke="#8cf020" stroke-width="1.2" fill="none"/></svg></div><div class="ti">Group Dancers 2</div><div class="by">By Bill Jackson</div></div><div class="cell" style="left:0px;top:162px"><div class="th"><svg width="47" height="47"><path d="M18,8 C20,10 26,10 28,8 C26,14 30,22 28,30 C26,36 28,40 30,42 M18,8 C22,16 18,26 22,34 C20,38 18,40 18,42 M21,40 L26,40" stroke="#8cf020" stroke-width="1.2" fill="none"/></svg></div><div class="ti">Male Dancer 1</div><div class="by">By Bill Jackson</div><svg class="cl" viewBox="0 0 16 11"><defs><linearGradient id="clg" x1="0" y1="0" x2="0" y2="1"><stop offset="0" stop-color="#e4e4e4"/><stop offset="1" stop-color="#8c8c8c"/></linearGradient></defs><path d="M3,10.5 C0.5,10.5 0,8 1,6.5 C2,5.5 3,5.5 4,5.5 C4,2.5 6,1 8.5,1 C11,1 12.5,3 12.5,5 C14.5,5 16,6.5 15.8,8.5 C15.6,10 14.5,10.5 13,10.5 Z" fill="url(#clg)"/><path d="M7.2,3.5 L8.8,3.5 L8.8,6.3 L10.5,6.3 L8,9 L5.5,6.3 L7.2,6.3 Z" fill="#3c3c3c"/></svg></div><div class="cell" style="left:183px;top:162px"><div class="th"><svg width="47" height="47"><path d="M24,22 L27,26 L26,32 L22,32 L22,26 Z" fill="#8cf020"/></svg></div><div class="ti">Male Dancer 2</div><div class="by">By Bill Jackson</div><svg class="cl" viewBox="0 0 16 11"><defs><linearGradient id="clg" x1="0" y1="0" x2="0" y2="1"><stop offset="0" stop-color="#e4e4e4"/><stop offset="1" stop-color="#8c8c8c"/></linearGradient></defs><path d="M3,10.5 C0.5,10.5 0,8 1,6.5 C2,5.5 3,5.5 4,5.5 C4,2.5 6,1 8.5,1 C11,1 12.5,3 12.5,5 C14.5,5 16,6.5 15.8,8.5 C15.6,10 14.5,10.5 13,10.5 Z" fill="url(#clg)"/><path d="M7.2,3.5 L8.8,3.5 L8.8,6.3 L10.5,6.3 L8,9 L5.5,6.3 L7.2,6.3 Z" fill="#3c3c3c"/></svg></div><div class="cell" style="left:366px;top:162px"><div class="th"><svg width="47" height="47"><path d="M28,10 C24,12 22,20 24,26 C22,32 20,38 22,44 C26,44 30,44 32,42 C34,36 30,30 32,26 C34,20 32,12 28,10 Z" stroke="#8cf020" stroke-width="1.2" fill="none"/></svg></div><div class="ti">Female Dancer 1</div><div class="by">By Bill Jackson</div><svg class="cl" viewBox="0 0 16 11"><defs><linearGradient id="clg" x1="0" y1="0" x2="0" y2="1"><stop offset="0" stop-color="#e4e4e4"/><stop offset="1" stop-color="#8c8c8c"/></linearGradient></defs><path d="M3,10.5 C0.5,10.5 0,8 1,6.5 C2,5.5 3,5.5 4,5.5 C4,2.5 6,1 8.5,1 C11,1 12.5,3 12.5,5 C14.5,5 16,6.5 15.8,8.5 C15.6,10 14.5,10.5 13,10.5 Z" fill="url(#clg)"/><path d="M7.2,3.5 L8.8,3.5 L8.8,6.3 L10.5,6.3 L8,9 L5.5,6.3 L7.2,6.3 Z" fill="#3c3c3c"/></svg></div><div class="cell" style="left:549px;top:162px"><div class="th"><svg width="47" height="47"><path d="M8,14 C14,18 20,22 24,22 C30,20 34,16 40,18 M24,16 C22,20 22,26 24,32 L22,40 M26,32 L28,40" stroke="#8cf020" stroke-width="1.2" fill="none"/></svg></div><div class="ti">Female Dancer 2</div><div class="by">By Bill Jackson</div><svg class="cl" viewBox="0 0 16 11"><defs><linearGradient id="clg" x1="0" y1="0" x2="0" y2="1"><stop offset="0" stop-color="#e4e4e4"/><stop offset="1" stop-color="#8c8c8c"/></linearGradient></defs><path d="M3,10.5 C0.5,10.5 0,8 1,6.5 C2,5.5 3,5.5 4,5.5 C4,2.5 6,1 8.5,1 C11,1 12.5,3 12.5,5 C14.5,5 16,6.5 15.8,8.5 C15.6,10 14.5,10.5 13,10.5 Z" fill="url(#clg)"/><path d="M7.2,3.5 L8.8,3.5 L8.8,6.3 L10.5,6.3 L8,9 L5.5,6.3 L7.2,6.3 Z" fill="#3c3c3c"/></svg></div><div class="cell" style="left:0px;top:216px"><div class="th"><svg width="47" height="47"><path d="M0,18 C10,14 20,10 30,6 L38,5" stroke="#20b0c0" stroke-width="1.2" fill="none"/><path d="M0,30 C10,34 20,40 30,42 L40,42 L50,40" stroke="#2040c0" stroke-width="1.2" fill="none"/><path d="M2,32 C8,36 16,40 24,42" stroke="#20c0c0" stroke-width="1.2" fill="none"/></svg></div><div class="ti">BG Wave</div><div class="by">By james keeley</div><svg class="cl" viewBox="0 0 16 11"><defs><linearGradient id="clg" x1="0" y1="0" x2="0" y2="1"><stop offset="0" stop-color="#e4e4e4"/><stop offset="1" stop-color="#8c8c8c"/></linearGradient></defs><path d="M3,10.5 C0.5,10.5 0,8 1,6.5 C2,5.5 3,5.5 4,5.5 C4,2.5 6,1 8.5,1 C11,1 12.5,3 12.5,5 C14.5,5 16,6.5 15.8,8.5 C15.6,10 14.5,10.5 13,10.5 Z" fill="url(#clg)"/><path d="M7.2,3.5 L8.8,3.5 L8.8,6.3 L10.5,6.3 L8,9 L5.5,6.3 L7.2,6.3 Z" fill="#3c3c3c"/></svg></div><div class="cell" style="left:183px;top:216px"><div class="th"><svg width="47" height="47"><path d="M0,1 C8,20 16,47 24,47 C32,47 40,20 47,1" stroke="#e01010" stroke-width="1.3" fill="none"/></svg></div><div class="ti">Sinewave One Period</div><div class="by">By Bradford S. Billet</div></div><div class="cell" style="left:366px;top:216px"><div class="th"><svg width="47" height="47"><path d="M0,46 C3,0 6,0 9,46 C12,0 15,0 18,46 C21,0 24,0 27,46 C30,0 33,0 36,46 C39,0 42,0 45,46" stroke="#e01010" stroke-width="1.3" fill="none"/></svg></div><div class="ti">Constant Sine Wave</div><div class="by">By Bradford S. Billet</div><svg class="cl" viewBox="0 0 16 11"><defs><linearGradient id="clg" x1="0" y1="0" x2="0" y2="1"><stop offset="0" stop-color="#e4e4e4"/><stop offset="1" stop-color="#8c8c8c"/></linearGradient></defs><path d="M3,10.5 C0.5,10.5 0,8 1,6.5 C2,5.5 3,5.5 4,5.5 C4,2.5 6,1 8.5,1 C11,1 12.5,3 12.5,5 C14.5,5 16,6.5 15.8,8.5 C15.6,10 14.5,10.5 13,10.5 Z" fill="url(#clg)"/><path d="M7.2,3.5 L8.8,3.5 L8.8,6.3 L10.5,6.3 L8,9 L5.5,6.3 L7.2,6.3 Z" fill="#3c3c3c"/></svg></div><div class="cell" style="left:549px;top:216px"><div class="th"></div><div class="ti">Test</div><div class="by">By Sergey Kurnikov</div><svg class="cl" viewBox="0 0 16 11"><defs><linearGradient id="clg" x1="0" y1="0" x2="0" y2="1"><stop offset="0" stop-color="#e4e4e4"/><stop offset="1" stop-color="#8c8c8c"/></linearGradient></defs><path d="M3,10.5 C0.5,10.5 0,8 1,6.5 C2,5.5 3,5.5 4,5.5 C4,2.5 6,1 8.5,1 C11,1 12.5,3 12.5,5 C14.5,5 16,6.5 15.8,8.5 C15.6,10 14.5,10.5 13,10.5 Z" fill="url(#clg)"/><path d="M7.2,3.5 L8.8,3.5 L8.8,6.3 L10.5,6.3 L8,9 L5.5,6.3 L7.2,6.3 Z" fill="#3c3c3c"/></svg></div><div class="cell" style="left:0px;top:270px"><div class="th"></div><div class="ti">Color Beams</div><div class="by">By Sergey Kurnikov</div><svg class="cl" viewBox="0 0 16 11"><defs><linearGradient id="clg" x1="0" y1="0" x2="0" y2="1"><stop offset="0" stop-color="#e4e4e4"/><stop offset="1" stop-color="#8c8c8c"/></linearGradient></defs><path d="M3,10.5 C0.5,10.5 0,8 1,6.5 C2,5.5 3,5.5 4,5.5 C4,2.5 6,1 8.5,1 C11,1 12.5,3 12.5,5 C14.5,5 16,6.5 15.8,8.5 C15.6,10 14.5,10.5 13,10.5 Z" fill="url(#clg)"/><path d="M7.2,3.5 L8.8,3.5 L8.8,6.3 L10.5,6.3 L8,9 L5.5,6.3 L7.2,6.3 Z" fill="#3c3c3c"/></svg></div><div class="cell" style="left:183px;top:270px"><div class="th"><svg width="47" height="47"><path d="M4,15 L10,22 C20,24 32,24 40,22 C38,20 30,18 22,18 L18,14 L20,18 L10,20 Z" fill="none" stroke="#fff" stroke-width="1.2"/><path d="M18,24 L26,25" stroke="#3040e0" stroke-width="1.5"/></svg></div><div class="ti">Aircraft spinning</div><div class="by">By Daniel Support</div><svg class="cl" viewBox="0 0 16 11"><defs><linearGradient id="clg" x1="0" y1="0" x2="0" y2="1"><stop offset="0" stop-color="#e4e4e4"/><stop offset="1" stop-color="#8c8c8c"/></linearGradient></defs><path d="M3,10.5 C0.5,10.5 0,8 1,6.5 C2,5.5 3,5.5 4,5.5 C4,2.5 6,1 8.5,1 C11,1 12.5,3 12.5,5 C14.5,5 16,6.5 15.8,8.5 C15.6,10 14.5,10.5 13,10.5 Z" fill="url(#clg)"/><path d="M7.2,3.5 L8.8,3.5 L8.8,6.3 L10.5,6.3 L8,9 L5.5,6.3 L7.2,6.3 Z" fill="#3c3c3c"/></svg></div><div class="cell" style="left:366px;top:270px"><div class="th"><svg width="47" height="47"><path d="M22,12 C26,8 30,12 28,16 C30,22 30,30 32,40 M22,16 C18,22 14,28 10,30 M24,26 L20,38" stroke="#8cf020" stroke-width="1.2" fill="none"/></svg></div><div class="ti">Female Dancer 3</div><div class="by">By Bill Jackson</div><svg class="cl" viewBox="0 0 16 11"><defs><linearGradient id="clg" x1="0" y1="0" x2="0" y2="1"><stop offset="0" stop-color="#e4e4e4"/><stop offset="1" stop-color="#8c8c8c"/></linearGradient></defs><path d="M3,10.5 C0.5,10.5 0,8 1,6.5 C2,5.5 3,5.5 4,5.5 C4,2.5 6,1 8.5,1 C11,1 12.5,3 12.5,5 C14.5,5 16,6.5 15.8,8.5 C15.6,10 14.5,10.5 13,10.5 Z" fill="url(#clg)"/><path d="M7.2,3.5 L8.8,3.5 L8.8,6.3 L10.5,6.3 L8,9 L5.5,6.3 L7.2,6.3 Z" fill="#3c3c3c"/></svg></div><div class="cell" style="left:549px;top:270px"><div class="th"><svg width="47" height="47"><path d="M20,12 L22,16 C20,22 24,28 22,34 L18,40 M28,12 L26,16 C28,22 26,28 28,34 L30,40" stroke="#8cf020" stroke-width="1.2" fill="none"/></svg></div><div class="ti">Female Dancer 4</div><div class="by">By Bill Jackson</div><svg class="cl" viewBox="0 0 16 11"><defs><linearGradient id="clg" x1="0" y1="0" x2="0" y2="1"><stop offset="0" stop-color="#e4e4e4"/><stop offset="1" stop-color="#8c8c8c"/></linearGradient></defs><path d="M3,10.5 C0.5,10.5 0,8 1,6.5 C2,5.5 3,5.5 4,5.5 C4,2.5 6,1 8.5,1 C11,1 12.5,3 12.5,5 C14.5,5 16,6.5 15.8,8.5 C15.6,10 14.5,10.5 13,10.5 Z" fill="url(#clg)"/><path d="M7.2,3.5 L8.8,3.5 L8.8,6.3 L10.5,6.3 L8,9 L5.5,6.3 L7.2,6.3 Z" fill="#3c3c3c"/></svg></div><div class="cell" style="left:0px;top:324px"><div class="th"><svg width="47" height="47"><path d="M8,10 C14,6 20,10 22,16 C30,20 34,30 38,38 C32,40 24,36 20,30 C14,26 10,18 8,10 Z" stroke="#8cf020" stroke-width="1.2" fill="none"/><ellipse cx="22" cy="30" rx="4" ry="2" stroke="#8cf020" fill="none"/></svg></div><div class="ti">Male Dancer 3</div><div class="by">By Bill Jackson</div><svg class="cl" viewBox="0 0 16 11"><defs><linearGradient id="clg" x1="0" y1="0" x2="0" y2="1"><stop offset="0" stop-color="#e4e4e4"/><stop offset="1" stop-color="#8c8c8c"/></linearGradient></defs><path d="M3,10.5 C0.5,10.5 0,8 1,6.5 C2,5.5 3,5.5 4,5.5 C4,2.5 6,1 8.5,1 C11,1 12.5,3 12.5,5 C14.5,5 16,6.5 15.8,8.5 C15.6,10 14.5,10.5 13,10.5 Z" fill="url(#clg)"/><path d="M7.2,3.5 L8.8,3.5 L8.8,6.3 L10.5,6.3 L8,9 L5.5,6.3 L7.2,6.3 Z" fill="#3c3c3c"/></svg></div><div class="cell" style="left:183px;top:324px"><div class="th"><svg width="47" height="47"><path d="M26,10 C30,12 30,18 30,22 C32,28 32,36 34,38 L24,38 C24,32 22,28 20,24 C22,18 22,12 26,10 Z" stroke="#8cf020" stroke-width="1.2" fill="none"/></svg></div><div class="ti">Female Dancer 5</div><div class="by">By Bill Jackson</div><svg class="cl" viewBox="0 0 16 11"><defs><linearGradient id="clg" x1="0" y1="0" x2="0" y2="1"><stop offset="0" stop-color="#e4e4e4"/><stop offset="1" stop-color="#8c8c8c"/></linearGradient></defs><path d="M3,10.5 C0.5,10.5 0,8 1,6.5 C2,5.5 3,5.5 4,5.5 C4,2.5 6,1 8.5,1 C11,1 12.5,3 12.5,5 C14.5,5 16,6.5 15.8,8.5 C15.6,10 14.5,10.5 13,10.5 Z" fill="url(#clg)"/><path d="M7.2,3.5 L8.8,3.5 L8.8,6.3 L10.5,6.3 L8,9 L5.5,6.3 L7.2,6.3 Z" fill="#3c3c3c"/></svg></div><div class="cell" style="left:366px;top:324px"><div class="th"></div><div class="ti">Thicker Hot Beams</div><div class="by">By Bill Jackson</div><svg class="cl" viewBox="0 0 16 11"><defs><linearGradient id="clg" x1="0" y1="0" x2="0" y2="1"><stop offset="0" stop-color="#e4e4e4"/><stop offset="1" stop-color="#8c8c8c"/></linearGradient></defs><path d="M3,10.5 C0.5,10.5 0,8 1,6.5 C2,5.5 3,5.5 4,5.5 C4,2.5 6,1 8.5,1 C11,1 12.5,3 12.5,5 C14.5,5 16,6.5 15.8,8.5 C15.6,10 14.5,10.5 13,10.5 Z" fill="url(#clg)"/><path d="M7.2,3.5 L8.8,3.5 L8.8,6.3 L10.5,6.3 L8,9 L5.5,6.3 L7.2,6.3 Z" fill="#3c3c3c"/></svg></div><div class="cell" style="left:549px;top:324px"><div class="th"></div><div class="ti">Thick Hot Beams</div><div class="by">By Bill Jackson</div><svg class="cl" viewBox="0 0 16 11"><defs><linearGradient id="clg" x1="0" y1="0" x2="0" y2="1"><stop offset="0" stop-color="#e4e4e4"/><stop offset="1" stop-color="#8c8c8c"/></linearGradient></defs><path d="M3,10.5 C0.5,10.5 0,8 1,6.5 C2,5.5 3,5.5 4,5.5 C4,2.5 6,1 8.5,1 C11,1 12.5,3 12.5,5 C14.5,5 16,6.5 15.8,8.5 C15.6,10 14.5,10.5 13,10.5 Z" fill="url(#clg)"/><path d="M7.2,3.5 L8.8,3.5 L8.8,6.3 L10.5,6.3 L8,9 L5.5,6.3 L7.2,6.3 Z" fill="#3c3c3c"/></svg></div><div class="cell" style="left:0px;top:378px"><div class="th"><svg width="47" height="47"><path d="M11,24 L13,28 L15,24 L17,28 L19,24 L21,28 L23,24 L25,28 L27,24 L29,28 L31,24 L33,28 L35,24" stroke="#a0f000" stroke-width="1.6" fill="none"/></svg></div><div class="ti">Classics</div><div class="by">By Alexey Sinitsyn</div><svg class="cl" viewBox="0 0 16 11"><defs><linearGradient id="clg" x1="0" y1="0" x2="0" y2="1"><stop offset="0" stop-color="#e4e4e4"/><stop offset="1" stop-color="#8c8c8c"/></linearGradient></defs><path d="M3,10.5 C0.5,10.5 0,8 1,6.5 C2,5.5 3,5.5 4,5.5 C4,2.5 6,1 8.5,1 C11,1 12.5,3 12.5,5 C14.5,5 16,6.5 15.8,8.5 C15.6,10 14.5,10.5 13,10.5 Z" fill="url(#clg)"/><path d="M7.2,3.5 L8.8,3.5 L8.8,6.3 L10.5,6.3 L8,9 L5.5,6.3 L7.2,6.3 Z" fill="#3c3c3c"/></svg></div><div class="cell" style="left:183px;top:378px"><div class="th"><svg width="47" height="47"><path d="M3,24 L12,24 M17,24 L27,24 M32,24 L44,24" stroke="#d01010" stroke-width="1.2"/></svg></div><div class="ti">Line and dots</div><div class="by">By Emile Chauvin</div><svg class="cl" viewBox="0 0 16 11"><defs><linearGradient id="clg" x1="0" y1="0" x2="0" y2="1"><stop offset="0" stop-color="#e4e4e4"/><stop offset="1" stop-color="#8c8c8c"/></linearGradient></defs><path d="M3,10.5 C0.5,10.5 0,8 1,6.5 C2,5.5 3,5.5 4,5.5 C4,2.5 6,1 8.5,1 C11,1 12.5,3 12.5,5 C14.5,5 16,6.5 15.8,8.5 C15.6,10 14.5,10.5 13,10.5 Z" fill="url(#clg)"/><path d="M7.2,3.5 L8.8,3.5 L8.8,6.3 L10.5,6.3 L8,9 L5.5,6.3 L7.2,6.3 Z" fill="#3c3c3c"/></svg></div><div class="cell" style="left:366px;top:378px"><div class="th"><svg width="47" height="47"><path d="M1,1 L12,1 M34,2 L45,2" stroke="#3070f0" stroke-width="1"/><path d="M17,9 L29,9" stroke="#fff" stroke-width="1"/><path d="M17,10 L29,10" stroke="#2020f0" stroke-width="1"/></svg></div><div class="ti" style="width:133px;overflow:hidden">Triple Lines - White</div><div class="ti" style="left:174px">..</div><div class="by">By Emile Chauvin</div><svg class="cl" viewBox="0 0 16 11"><defs><linearGradient id="clg" x1="0" y1="0" x2="0" y2="1"><stop offset="0" stop-color="#e4e4e4"/><stop offset="1" stop-color="#8c8c8c"/></linearGradient></defs><path d="M3,10.5 C0.5,10.5 0,8 1,6.5 C2,5.5 3,5.5 4,5.5 C4,2.5 6,1 8.5,1 C11,1 12.5,3 12.5,5 C14.5,5 16,6.5 15.8,8.5 C15.6,10 14.5,10.5 13,10.5 Z" fill="url(#clg)"/><path d="M7.2,3.5 L8.8,3.5 L8.8,6.3 L10.5,6.3 L8,9 L5.5,6.3 L7.2,6.3 Z" fill="#3c3c3c"/></svg></div><div class="cell" style="left:549px;top:378px"><div class="th"><svg width="47" height="47"><path d="M0,8 C4,5 8,11 12,8 C16,5 20,11 24,8 C28,5 32,11 36,8 C40,5 44,11 47,8" stroke="#f0a020" stroke-width="1.2" fill="none"/><path d="M0,41 C4,38 8,44 12,41 C16,38 20,44 24,41 C28,38 32,44 36,41 C40,38 44,44 47,41" stroke="#a0a870" stroke-width="1.2" fill="none"/></svg></div><div class="ti">Billy Jean</div><div class="by">By Eddy Houben</div><svg class="cl" viewBox="0 0 16 11"><defs><linearGradient id="clg" x1="0" y1="0" x2="0" y2="1"><stop offset="0" stop-color="#e4e4e4"/><stop offset="1" stop-color="#8c8c8c"/></linearGradient></defs><path d="M3,10.5 C0.5,10.5 0,8 1,6.5 C2,5.5 3,5.5 4,5.5 C4,2.5 6,1 8.5,1 C11,1 12.5,3 12.5,5 C14.5,5 16,6.5 15.8,8.5 C15.6,10 14.5,10.5 13,10.5 Z" fill="url(#clg)"/><path d="M7.2,3.5 L8.8,3.5 L8.8,6.3 L10.5,6.3 L8,9 L5.5,6.3 L7.2,6.3 Z" fill="#3c3c3c"/></svg></div><div class="cell" style="left:0px;top:432px"><div class="th"></div><div class="ti">Seek Bromance</div><div class="by">By GAUBERT  RONAN</div><svg class="cl" viewBox="0 0 16 11"><defs><linearGradient id="clg" x1="0" y1="0" x2="0" y2="1"><stop offset="0" stop-color="#e4e4e4"/><stop offset="1" stop-color="#8c8c8c"/></linearGradient></defs><path d="M3,10.5 C0.5,10.5 0,8 1,6.5 C2,5.5 3,5.5 4,5.5 C4,2.5 6,1 8.5,1 C11,1 12.5,3 12.5,5 C14.5,5 16,6.5 15.8,8.5 C15.6,10 14.5,10.5 13,10.5 Z" fill="url(#clg)"/><path d="M7.2,3.5 L8.8,3.5 L8.8,6.3 L10.5,6.3 L8,9 L5.5,6.3 L7.2,6.3 Z" fill="#3c3c3c"/></svg></div><div class="cell" style="left:183px;top:432px"><div class="th"><svg width="47" height="47"><circle cx="24" cy="23" r="15" fill="none" stroke="#d02090" stroke-width="1.2"/></svg></div><div class="ti" style="width:133px;overflow:hidden">Born This Way [Lad</div><div class="ti" style="left:174px">..</div><div class="by">By Jarret Ammer</div><svg class="cl" viewBox="0 0 16 11"><defs><linearGradient id="clg" x1="0" y1="0" x2="0" y2="1"><stop offset="0" stop-color="#e4e4e4"/><stop offset="1" stop-color="#8c8c8c"/></linearGradient></defs><path d="M3,10.5 C0.5,10.5 0,8 1,6.5 C2,5.5 3,5.5 4,5.5 C4,2.5 6,1 8.5,1 C11,1 12.5,3 12.5,5 C14.5,5 16,6.5 15.8,8.5 C15.6,10 14.5,10.5 13,10.5 Z" fill="url(#clg)"/><path d="M7.2,3.5 L8.8,3.5 L8.8,6.3 L10.5,6.3 L8,9 L5.5,6.3 L7.2,6.3 Z" fill="#3c3c3c"/></svg></div><div class="cell" style="left:366px;top:432px"><div class="th"><svg width="47" height="47"><path d="M15.6,9.2 L30.3,6.0 L25.1,18.0" stroke="#ff60c0" stroke-width="0.9" fill="none"/><path d="M3.6,23.8 L2.7,20.8 L4.1,6.7" stroke="#f0f060" stroke-width="0.9" fill="none"/><path d="M20.1,36.9 L6.6,12.2 L29.2,41.9" stroke="#40c0ff" stroke-width="0.9" fill="none"/><path d="M27.0,19.3 L44.9,4.9 L39.6,14.9" stroke="#80ff80" stroke-width="0.9" fill="none"/><path d="M7.5,7.8 L14.9,36.5 L9.1,26.8" stroke="#ffffff" stroke-width="0.9" fill="none"/><path d="M29.8,18.3 L25.6,5.6 L3.7,11.4" stroke="#ff8040" stroke-width="0.9" fill="none"/><path d="M31.6,20.5 L15.1,27.0 L21.4,15.3" stroke="#c080ff" stroke-width="0.9" fill="none"/><path d="M36.7,31.7 L12.0,26.6 L24.6,38.9" stroke="#60ffe0" stroke-width="0.9" fill="none"/><path d="M33.8,14.8 L45.1,7.8 L19.8,34.0" stroke="#ff60c0" stroke-width="0.9" fill="none"/><path d="M7.8,23.0 L2.8,30.4 L35.4,26.5" stroke="#f0f060" stroke-width="0.9" fill="none"/><path d="M40.4,15.9 L32.3,27.4 L27.1,21.7" stroke="#40c0ff" stroke-width="0.9" fill="none"/><path d="M38.8,41.7 L22.3,30.2 L3.7,31.8" stroke="#80ff80" stroke-width="0.9" fill="none"/><path d="M30.1,43.7 L38.0,14.7 L18.4,30.4" stroke="#ffffff" stroke-width="0.9" fill="none"/><path d="M2.0,21.9 L8.6,7.8 L3.7,34.5" stroke="#ff8040" stroke-width="0.9" fill="none"/><path d="M6.8,13.2 L18.6,38.7 L4.6,21.4" stroke="#c080ff" stroke-width="0.9" fill="none"/><path d="M25.7,39.2 L37.9,38.4 L13.5,20.0" stroke="#60ffe0" stroke-width="0.9" fill="none"/></svg></div><div class="ti">All around the world</div><div class="by">By Stefano Toccaceli</div><svg class="cl" viewBox="0 0 16 11"><defs><linearGradient id="clg" x1="0" y1="0" x2="0" y2="1"><stop offset="0" stop-color="#e4e4e4"/><stop offset="1" stop-color="#8c8c8c"/></linearGradient></defs><path d="M3,10.5 C0.5,10.5 0,8 1,6.5 C2,5.5 3,5.5 4,5.5 C4,2.5 6,1 8.5,1 C11,1 12.5,3 12.5,5 C14.5,5 16,6.5 15.8,8.5 C15.6,10 14.5,10.5 13,10.5 Z" fill="url(#clg)"/><path d="M7.2,3.5 L8.8,3.5 L8.8,6.3 L10.5,6.3 L8,9 L5.5,6.3 L7.2,6.3 Z" fill="#3c3c3c"/></svg></div><div class="cell" style="left:549px;top:432px"><div class="th"><svg width="47" height="47"><circle cx="24" cy="20" r="10" fill="none" stroke="#f08010" stroke-width="1.4"/><path d="M2,40 L4,32 L6,44 M10,44 L12,30 L14,44 M18,44 L20,28 L22,44 L24,30 L26,44 M30,44 L32,30 L36,30 L38,44 M40,44 L42,30 L46,44" stroke="#3090f0" stroke-width="1.2" fill="none"/><path d="M8,44 L9,34 M16,44 L17,32" stroke="#f0e060" stroke-width="1"/></svg></div><div class="ti" style="width:133px;overflow:hidden">You should be danci</div><div class="ti" style="left:174px">..</div><div class="by">By Stefano Toccaceli</div><svg class="cl" viewBox="0 0 16 11"><defs><linearGradient id="clg" x1="0" y1="0" x2="0" y2="1"><stop offset="0" stop-color="#e4e4e4"/><stop offset="1" stop-color="#8c8c8c"/></linearGradient></defs><path d="M3,10.5 C0.5,10.5 0,8 1,6.5 C2,5.5 3,5.5 4,5.5 C4,2.5 6,1 8.5,1 C11,1 12.5,3 12.5,5 C14.5,5 16,6.5 15.8,8.5 C15.6,10 14.5,10.5 13,10.5 Z" fill="url(#clg)"/><path d="M7.2,3.5 L8.8,3.5 L8.8,6.3 L10.5,6.3 L8,9 L5.5,6.3 L7.2,6.3 Z" fill="#3c3c3c"/></svg></div><div class="cell" style="left:0px;top:486px"><div class="th"><svg width="47" height="47"><path d="M40,8 C26,6 16,14 16,24 C16,34 24,42 36,44 L46,40" stroke="#e0b090" stroke-width="1.2" fill="none"/><path d="M20,30 C24,36 32,40 40,38 M30,8 L40,8" stroke="#b08060" stroke-width="1.2" fill="none"/></svg></div><div class="ti" style="width:133px;overflow:hidden">Mad history of the w</div><div class="ti" style="left:174px">..</div><div class="by">By Stefano Toccaceli</div><svg class="cl" viewBox="0 0 16 11"><defs><linearGradient id="clg" x1="0" y1="0" x2="0" y2="1"><stop offset="0" stop-color="#e4e4e4"/><stop offset="1" stop-color="#8c8c8c"/></linearGradient></defs><path d="M3,10.5 C0.5,10.5 0,8 1,6.5 C2,5.5 3,5.5 4,5.5 C4,2.5 6,1 8.5,1 C11,1 12.5,3 12.5,5 C14.5,5 16,6.5 15.8,8.5 C15.6,10 14.5,10.5 13,10.5 Z" fill="url(#clg)"/><path d="M7.2,3.5 L8.8,3.5 L8.8,6.3 L10.5,6.3 L8,9 L5.5,6.3 L7.2,6.3 Z" fill="#3c3c3c"/></svg></div><div class="cell" style="left:183px;top:486px"><div class="th"><svg width="47" height="47"><circle cx="24" cy="24" r="19" fill="none" stroke="#e01010" stroke-width="1.3"/><path d="M24,8 C30,10 32,18 26,24 M40,24 C38,30 30,32 24,26 M8,24 C10,18 18,16 24,22 M24,40 C18,38 16,30 22,24" stroke="#f0f020" stroke-width="1.2" fill="none"/><path d="M12,14 C18,12 24,16 24,20 M36,34 C30,36 24,32 24,28 M36,14 C34,20 28,24 26,24 M12,34 C14,28 20,24 22,24" stroke="#2040f0" stroke-width="1.2" fill="none"/></svg></div><div class="ti">Jump</div><div class="by">By Stefano Toccaceli</div><svg class="cl" viewBox="0 0 16 11"><defs><linearGradient id="clg" x1="0" y1="0" x2="0" y2="1"><stop offset="0" stop-color="#e4e4e4"/><stop offset="1" stop-color="#8c8c8c"/></linearGradient></defs><path d="M3,10.5 C0.5,10.5 0,8 1,6.5 C2,5.5 3,5.5 4,5.5 C4,2.5 6,1 8.5,1 C11,1 12.5,3 12.5,5 C14.5,5 16,6.5 15.8,8.5 C15.6,10 14.5,10.5 13,10.5 Z" fill="url(#clg)"/><path d="M7.2,3.5 L8.8,3.5 L8.8,6.3 L10.5,6.3 L8,9 L5.5,6.3 L7.2,6.3 Z" fill="#3c3c3c"/></svg></div><div class="cell" style="left:366px;top:486px"><div class="th"><svg width="47" height="47"><circle cx="24" cy="24" r="9" fill="#c01010"/><rect x="24.6" y="31.9" width="1.6" height="1.6" fill="#f0c020"/><rect x="21.1" y="24.5" width="1.6" height="1.6" fill="#f0c020"/><rect x="38.0" y="30.1" width="1.6" height="1.6" fill="#f03010"/><rect x="21.9" y="23.3" width="1.6" height="1.6" fill="#f01010"/><rect x="39.0" y="23.6" width="1.6" height="1.6" fill="#f08010"/><rect x="21.1" y="26.2" width="1.6" height="1.6" fill="#f01010"/><rect x="25.2" y="34.8" width="1.6" height="1.6" fill="#f08010"/><rect x="23.2" y="9.1" width="1.6" height="1.6" fill="#e00000"/><rect x="25.9" y="13.0" width="1.6" height="1.6" fill="#f01010"/><rect x="18.7" y="40.0" width="1.6" height="1.6" fill="#f01010"/><rect x="25.0" y="22.0" width="1.6" height="1.6" fill="#f08010"/><rect x="21.5" y="13.3" width="1.6" height="1.6" fill="#f08010"/><rect x="21.2" y="26.2" width="1.6" height="1.6" fill="#f01010"/><rect x="30.3" y="18.0" width="1.6" height="1.6" fill="#f01010"/><rect x="30.6" y="25.5" width="1.6" height="1.6" fill="#e00000"/><rect x="22.9" y="24.5" width="1.6" height="1.6" fill="#e00000"/><rect x="32.3" y="13.3" width="1.6" height="1.6" fill="#f0c020"/><rect x="19.4" y="30.2" width="1.6" height="1.6" fill="#f0c020"/><rect x="22.5" y="25.0" width="1.6" height="1.6" fill="#f01010"/><rect x="28.8" y="17.9" width="1.6" height="1.6" fill="#f0c020"/><rect x="19.9" y="16.3" width="1.6" height="1.6" fill="#f0c020"/><rect x="35.3" y="16.3" width="1.6" height="1.6" fill="#f0c020"/><rect x="29.5" y="28.2" width="1.6" height="1.6" fill="#f0c020"/><rect x="22.9" y="33.7" width="1.6" height="1.6" fill="#f01010"/><rect x="37.6" y="29.7" width="1.6" height="1.6" fill="#f01010"/><rect x="13.4" y="39.8" width="1.6" height="1.6" fill="#f01010"/><rect x="20.1" y="26.5" width="1.6" height="1.6" fill="#f08010"/><rect x="28.2" y="19.6" width="1.6" height="1.6" fill="#f01010"/><rect x="22.8" y="23.1" width="1.6" height="1.6" fill="#f0c020"/><rect x="20.0" y="31.2" width="1.6" height="1.6" fill="#f03010"/><rect x="16.5" y="23.7" width="1.6" height="1.6" fill="#f01010"/><rect x="24.8" y="24.7" width="1.6" height="1.6" fill="#f0c020"/><rect x="27.4" y="24.7" width="1.6" height="1.6" fill="#f0c020"/><rect x="23.3" y="32.2" width="1.6" height="1.6" fill="#e00000"/><rect x="29.2" y="25.4" width="1.6" height="1.6" fill="#f01010"/><rect x="28.6" y="20.5" width="1.6" height="1.6" fill="#f08010"/><rect x="19.7" y="28.2" width="1.6" height="1.6" fill="#f0c020"/><rect x="21.3" y="18.2" width="1.6" height="1.6" fill="#f01010"/><rect x="17.2" y="17.6" width="1.6" height="1.6" fill="#f08010"/><rect x="21.2" y="20.8" width="1.6" height="1.6" fill="#e00000"/><rect x="24.6" y="31.5" width="1.6" height="1.6" fill="#f0c020"/><rect x="17.3" y="43.5" width="1.6" height="1.6" fill="#f03010"/><rect x="33.5" y="24.7" width="1.6" height="1.6" fill="#f01010"/><rect x="19.7" y="28.2" width="1.6" height="1.6" fill="#f0c020"/><rect x="16.7" y="16.0" width="1.6" height="1.6" fill="#f08010"/><rect x="21.1" y="27.9" width="1.6" height="1.6" fill="#f03010"/><rect x="22.0" y="22.4" width="1.6" height="1.6" fill="#f0c020"/><rect x="32.9" y="27.5" width="1.6" height="1.6" fill="#e00000"/><rect x="32.1" y="25.1" width="1.6" height="1.6" fill="#f03010"/><rect x="16.7" y="19.2" width="1.6" height="1.6" fill="#f03010"/><rect x="26.6" y="29.4" width="1.6" height="1.6" fill="#f0c020"/><rect x="22.9" y="36.6" width="1.6" height="1.6" fill="#f08010"/><rect x="30.9" y="29.3" width="1.6" height="1.6" fill="#e00000"/><rect x="22.2" y="4.6" width="1.6" height="1.6" fill="#f03010"/><rect x="19.6" y="24.0" width="1.6" height="1.6" fill="#f03010"/><rect x="26.3" y="29.4" width="1.6" height="1.6" fill="#f08010"/><rect x="18.5" y="16.5" width="1.6" height="1.6" fill="#f03010"/><rect x="20.9" y="17.9" width="1.6" height="1.6" fill="#f01010"/><rect x="20.5" y="25.4" width="1.6" height="1.6" fill="#f03010"/><rect x="23.8" y="19.4" width="1.6" height="1.6" fill="#f01010"/><rect x="28.6" y="20.0" width="1.6" height="1.6" fill="#f01010"/><rect x="26.6" y="24.6" width="1.6" height="1.6" fill="#f01010"/><rect x="21.6" y="29.6" width="1.6" height="1.6" fill="#f03010"/><rect x="19.0" y="31.9" width="1.6" height="1.6" fill="#e00000"/><rect x="31.2" y="28.3" width="1.6" height="1.6" fill="#f08010"/><rect x="22.0" y="31.6" width="1.6" height="1.6" fill="#f03010"/><rect x="19.0" y="25.1" width="1.6" height="1.6" fill="#f0c020"/><rect x="19.2" y="27.0" width="1.6" height="1.6" fill="#f08010"/><rect x="34.6" y="39.7" width="1.6" height="1.6" fill="#f0c020"/><rect x="25.5" y="23.9" width="1.6" height="1.6" fill="#f08010"/><rect x="12.0" y="19.3" width="1.6" height="1.6" fill="#f01010"/><rect x="23.9" y="21.9" width="1.6" height="1.6" fill="#e00000"/><rect x="23.9" y="13.9" width="1.6" height="1.6" fill="#f01010"/><rect x="26.0" y="21.6" width="1.6" height="1.6" fill="#f0c020"/><rect x="29.0" y="23.1" width="1.6" height="1.6" fill="#f01010"/><rect x="28.0" y="21.2" width="1.6" height="1.6" fill="#e00000"/><rect x="18.1" y="23.5" width="1.6" height="1.6" fill="#f08010"/><rect x="10.1" y="16.7" width="1.6" height="1.6" fill="#f01010"/><rect x="16.6" y="24.9" width="1.6" height="1.6" fill="#f01010"/><rect x="20.3" y="17.9" width="1.6" height="1.6" fill="#f0c020"/><rect x="7.8" y="20.2" width="1.6" height="1.6" fill="#f01010"/><rect x="20.5" y="29.4" width="1.6" height="1.6" fill="#f03010"/><rect x="38.0" y="21.5" width="1.6" height="1.6" fill="#f01010"/><rect x="21.3" y="27.6" width="1.6" height="1.6" fill="#f01010"/><rect x="26.8" y="26.7" width="1.6" height="1.6" fill="#f01010"/><rect x="24.9" y="20.7" width="1.6" height="1.6" fill="#f01010"/><rect x="29.1" y="13.7" width="1.6" height="1.6" fill="#f08010"/><rect x="25.4" y="24.5" width="1.6" height="1.6" fill="#f03010"/><rect x="24.1" y="31.7" width="1.6" height="1.6" fill="#f01010"/><rect x="17.0" y="25.2" width="1.6" height="1.6" fill="#f01010"/><rect x="10" y="10" width="2" height="2" fill="#ffffff"/><rect x="38" y="10" width="2" height="2" fill="#ffffff"/><rect x="8" y="32" width="2" height="2" fill="#ffffff"/><rect x="38" y="36" width="2" height="2" fill="#ffffff"/><rect x="24" y="8" width="2" height="2" fill="#ffffff"/><rect x="14" y="40" width="2" height="2" fill="#ffffff"/><rect x="4" y="20" width="1.5" height="1.5" fill="#e01010"/><rect x="44" y="18" width="1.5" height="1.5" fill="#e01010"/><rect x="20" y="44" width="1.5" height="1.5" fill="#e01010"/><rect x="30" y="3" width="1.5" height="1.5" fill="#e01010"/><path d="M20,22 L24,26 L28,22" stroke="#3060f0" stroke-width="1" fill="none"/></svg></div><div class="ti">Kesha &quot;Blow&quot;</div><div class="by">By marc arotsky</div><svg class="cl" viewBox="0 0 16 11"><defs><linearGradient id="clg" x1="0" y1="0" x2="0" y2="1"><stop offset="0" stop-color="#e4e4e4"/><stop offset="1" stop-color="#8c8c8c"/></linearGradient></defs><path d="M3,10.5 C0.5,10.5 0,8 1,6.5 C2,5.5 3,5.5 4,5.5 C4,2.5 6,1 8.5,1 C11,1 12.5,3 12.5,5 C14.5,5 16,6.5 15.8,8.5 C15.6,10 14.5,10.5 13,10.5 Z" fill="url(#clg)"/><path d="M7.2,3.5 L8.8,3.5 L8.8,6.3 L10.5,6.3 L8,9 L5.5,6.3 L7.2,6.3 Z" fill="#3c3c3c"/></svg></div><div class="cell" style="left:549px;top:486px"><div class="th"><svg width="47" height="47"><path d="M16,36 C10,30 14,20 20,12 C24,16 20,26 22,30 C26,32 28,24 30,20 M20,30 L18,40 M22,36 L26,44" stroke="#20e020" stroke-width="1.2" fill="none"/><circle cx="32" cy="10" r="2" fill="none" stroke="#e02020"/><path d="M22,32 L24,44" stroke="#e02020" stroke-width="1"/></svg></div><div class="ti">Sport Show</div><div class="by">By Mikhail Kobzar</div><svg class="cl" viewBox="0 0 16 11"><defs><linearGradient id="clg" x1="0" y1="0" x2="0" y2="1"><stop offset="0" stop-color="#e4e4e4"/><stop offset="1" stop-color="#8c8c8c"/></linearGradient></defs><path d="M3,10.5 C0.5,10.5 0,8 1,6.5 C2,5.5 3,5.5 4,5.5 C4,2.5 6,1 8.5,1 C11,1 12.5,3 12.5,5 C14.5,5 16,6.5 15.8,8.5 C15.6,10 14.5,10.5 13,10.5 Z" fill="url(#clg)"/><path d="M7.2,3.5 L8.8,3.5 L8.8,6.3 L10.5,6.3 L8,9 L5.5,6.3 L7.2,6.3 Z" fill="#3c3c3c"/></svg></div><div class="cell" style="left:0px;top:540px"><div class="th"><svg width="47" height="47"><g fill="none" stroke-width="1.1"><path d="M2,22 L8,12 L10,22 L16,20 L12,28 L14,36 L6,30 L0,34 L2,26 Z" stroke="#4040f0"/><path d="M22,20 L26,10 L30,18 L36,18 L32,24 L34,32 L26,28 L20,32 L22,24 Z" stroke="#f02020"/><path d="M32,26 L40,20 L40,30 L46,32 L40,36 L42,44 L34,40 L28,42 L30,34 Z" stroke="#20c0f0"/></g></svg></div><div class="ti" style="width:133px;overflow:hidden">50 years of creative</div><div class="ti" style="left:174px">..</div><div class="by">By Mikhail Kobzar</div><svg class="cl" viewBox="0 0 16 11"><defs><linearGradient id="clg" x1="0" y1="0" x2="0" y2="1"><stop offset="0" stop-color="#e4e4e4"/><stop offset="1" stop-color="#8c8c8c"/></linearGradient></defs><path d="M3,10.5 C0.5,10.5 0,8 1,6.5 C2,5.5 3,5.5 4,5.5 C4,2.5 6,1 8.5,1 C11,1 12.5,3 12.5,5 C14.5,5 16,6.5 15.8,8.5 C15.6,10 14.5,10.5 13,10.5 Z" fill="url(#clg)"/><path d="M7.2,3.5 L8.8,3.5 L8.8,6.3 L10.5,6.3 L8,9 L5.5,6.3 L7.2,6.3 Z" fill="#3c3c3c"/></svg></div><div class="cell" style="left:183px;top:540px"><div class="th"><svg width="47" height="47"><g stroke="#c020d0" stroke-width="1.2" fill="none"><path d="M24,24 C14,18 14,10 22,6"/><path d="M24,24 C32,16 40,20 40,28"/><path d="M24,24 C28,34 22,40 14,38"/><path d="M24,24 C16,30 8,28 6,20"/></g><circle cx="24" cy="24" r="3" fill="#c0c0e0"/></svg></div><div class="ti">Dream On</div><div class="by">By Robert Conway</div><svg class="cl" viewBox="0 0 16 11"><defs><linearGradient id="clg" x1="0" y1="0" x2="0" y2="1"><stop offset="0" stop-color="#e4e4e4"/><stop offset="1" stop-color="#8c8c8c"/></linearGradient></defs><path d="M3,10.5 C0.5,10.5 0,8 1,6.5 C2,5.5 3,5.5 4,5.5 C4,2.5 6,1 8.5,1 C11,1 12.5,3 12.5,5 C14.5,5 16,6.5 15.8,8.5 C15.6,10 14.5,10.5 13,10.5 Z" fill="url(#clg)"/><path d="M7.2,3.5 L8.8,3.5 L8.8,6.3 L10.5,6.3 L8,9 L5.5,6.3 L7.2,6.3 Z" fill="#3c3c3c"/></svg></div><div class="cell" style="left:366px;top:540px"><div class="th"><svg width="47" height="47"><path d="M6,40 L12,8 L40,38 L30,12 L6,30 L40,20 L42,42 Z" stroke="#20e040" stroke-width="1.1" fill="none"/><ellipse cx="24" cy="22" rx="12" ry="10" stroke="#a040e0" stroke-width="1.3" fill="none"/></svg></div><div class="ti">Vela - Painkiller</div><div class="by">By Rob Stanley</div><svg class="cl" viewBox="0 0 16 11"><defs><linearGradient id="clg" x1="0" y1="0" x2="0" y2="1"><stop offset="0" stop-color="#e4e4e4"/><stop offset="1" stop-color="#8c8c8c"/></linearGradient></defs><path d="M3,10.5 C0.5,10.5 0,8 1,6.5 C2,5.5 3,5.5 4,5.5 C4,2.5 6,1 8.5,1 C11,1 12.5,3 12.5,5 C14.5,5 16,6.5 15.8,8.5 C15.6,10 14.5,10.5 13,10.5 Z" fill="url(#clg)"/><path d="M7.2,3.5 L8.8,3.5 L8.8,6.3 L10.5,6.3 L8,9 L5.5,6.3 L7.2,6.3 Z" fill="#3c3c3c"/></svg></div><div class="cell" style="left:549px;top:540px"><div class="th"><svg width="47" height="47"><path d="M16,24 L24,24" stroke="#20e020" stroke-width="1.2"/></svg></div><div class="ti" style="width:133px;overflow:hidden">Hadouken - Oxygen</div><div class="ti" style="left:174px">..</div><div class="by">By Rob Stanley</div><svg class="cl" viewBox="0 0 16 11"><defs><linearGradient id="clg" x1="0" y1="0" x2="0" y2="1"><stop offset="0" stop-color="#e4e4e4"/><stop offset="1" stop-color="#8c8c8c"/></linearGradient></defs><path d="M3,10.5 C0.5,10.5 0,8 1,6.5 C2,5.5 3,5.5 4,5.5 C4,2.5 6,1 8.5,1 C11,1 12.5,3 12.5,5 C14.5,5 16,6.5 15.8,8.5 C15.6,10 14.5,10.5 13,10.5 Z" fill="url(#clg)"/><path d="M7.2,3.5 L8.8,3.5 L8.8,6.3 L10.5,6.3 L8,9 L5.5,6.3 L7.2,6.3 Z" fill="#3c3c3c"/></svg></div><div class="cell" style="left:0px;top:594px"><div class="th"><svg width="47" height="47"><path d="M12,26 L20,24 L26,18 L30,28 L14,30 Z" stroke="#fff" stroke-width="1" fill="none"/><path d="M26,22 L36,24 M26,24 L36,26 M27,26 L36,28" stroke="#f040a0" stroke-width="1.2"/></svg></div><div class="ti">Time by Pink Floyd</div><div class="by">By Robert Conway</div><svg class="cl" viewBox="0 0 16 11"><defs><linearGradient id="clg" x1="0" y1="0" x2="0" y2="1"><stop offset="0" stop-color="#e4e4e4"/><stop offset="1" stop-color="#8c8c8c"/></linearGradient></defs><path d="M3,10.5 C0.5,10.5 0,8 1,6.5 C2,5.5 3,5.5 4,5.5 C4,2.5 6,1 8.5,1 C11,1 12.5,3 12.5,5 C14.5,5 16,6.5 15.8,8.5 C15.6,10 14.5,10.5 13,10.5 Z" fill="url(#clg)"/><path d="M7.2,3.5 L8.8,3.5 L8.8,6.3 L10.5,6.3 L8,9 L5.5,6.3 L7.2,6.3 Z" fill="#3c3c3c"/></svg></div><div class="cell" style="left:183px;top:594px"><div class="th"><svg width="47" height="47"><circle cx="24" cy="13" r="4" fill="none" stroke="#30a060"/><circle cx="25" cy="35" r="4" fill="none" stroke="#3060c0"/></svg></div><div class="ti">Hiding all the stars</div><div class="by">By Rob Stanley</div><svg class="cl" viewBox="0 0 16 11"><defs><linearGradient id="clg" x1="0" y1="0" x2="0" y2="1"><stop offset="0" stop-color="#e4e4e4"/><stop offset="1" stop-color="#8c8c8c"/></linearGradient></defs><path d="M3,10.5 C0.5,10.5 0,8 1,6.5 C2,5.5 3,5.5 4,5.5 C4,2.5 6,1 8.5,1 C11,1 12.5,3 12.5,5 C14.5,5 16,6.5 15.8,8.5 C15.6,10 14.5,10.5 13,10.5 Z" fill="url(#clg)"/><path d="M7.2,3.5 L8.8,3.5 L8.8,6.3 L10.5,6.3 L8,9 L5.5,6.3 L7.2,6.3 Z" fill="#3c3c3c"/></svg></div><div class="cell" style="left:366px;top:594px"><div class="th"><svg width="47" height="47"><path d="M19,34 L22,36 L19,37 Z" stroke="#20c0e0" fill="none"/></svg></div><div class="ti" style="width:133px;overflow:hidden">Rymdreglage - 8 bit</div><div class="ti" style="left:174px">..</div><div class="by">By Rob Stanley</div><svg class="cl" viewBox="0 0 16 11"><defs><linearGradient id="clg" x1="0" y1="0" x2="0" y2="1"><stop offset="0" stop-color="#e4e4e4"/><stop offset="1" stop-color="#8c8c8c"/></linearGradient></defs><path d="M3,10.5 C0.5,10.5 0,8 1,6.5 C2,5.5 3,5.5 4,5.5 C4,2.5 6,1 8.5,1 C11,1 12.5,3 12.5,5 C14.5,5 16,6.5 15.8,8.5 C15.6,10 14.5,10.5 13,10.5 Z" fill="url(#clg)"/><path d="M7.2,3.5 L8.8,3.5 L8.8,6.3 L10.5,6.3 L8,9 L5.5,6.3 L7.2,6.3 Z" fill="#3c3c3c"/></svg></div><div class="cell" style="left:549px;top:594px"><div class="th"></div><div class="ti">Hiding all the stars</div><div class="by">By Rob Stanley</div><svg class="cl" viewBox="0 0 16 11"><defs><linearGradient id="clg" x1="0" y1="0" x2="0" y2="1"><stop offset="0" stop-color="#e4e4e4"/><stop offset="1" stop-color="#8c8c8c"/></linearGradient></defs><path d="M3,10.5 C0.5,10.5 0,8 1,6.5 C2,5.5 3,5.5 4,5.5 C4,2.5 6,1 8.5,1 C11,1 12.5,3 12.5,5 C14.5,5 16,6.5 15.8,8.5 C15.6,10 14.5,10.5 13,10.5 Z" fill="url(#clg)"/><path d="M7.2,3.5 L8.8,3.5 L8.8,6.3 L10.5,6.3 L8,9 L5.5,6.3 L7.2,6.3 Z" fill="#3c3c3c"/></svg></div><div class="cell" style="left:0px;top:648px"><div class="th"></div><div class="ti">Tribute to Pink Floyd</div><svg class="cl" viewBox="0 0 16 11"><defs><linearGradient id="clg" x1="0" y1="0" x2="0" y2="1"><stop offset="0" stop-color="#e4e4e4"/><stop offset="1" stop-color="#8c8c8c"/></linearGradient></defs><path d="M3,10.5 C0.5,10.5 0,8 1,6.5 C2,5.5 3,5.5 4,5.5 C4,2.5 6,1 8.5,1 C11,1 12.5,3 12.5,5 C14.5,5 16,6.5 15.8,8.5 C15.6,10 14.5,10.5 13,10.5 Z" fill="url(#clg)"/><path d="M7.2,3.5 L8.8,3.5 L8.8,6.3 L10.5,6.3 L8,9 L5.5,6.3 L7.2,6.3 Z" fill="#3c3c3c"/></svg></div><div class="cell" style="left:183px;top:648px"><div class="th"></div><div class="ti">Lady GAGA remix</div><svg class="cl" viewBox="0 0 16 11"><defs><linearGradient id="clg" x1="0" y1="0" x2="0" y2="1"><stop offset="0" stop-color="#e4e4e4"/><stop offset="1" stop-color="#8c8c8c"/></linearGradient></defs><path d="M3,10.5 C0.5,10.5 0,8 1,6.5 C2,5.5 3,5.5 4,5.5 C4,2.5 6,1 8.5,1 C11,1 12.5,3 12.5,5 C14.5,5 16,6.5 15.8,8.5 C15.6,10 14.5,10.5 13,10.5 Z" fill="url(#clg)"/><path d="M7.2,3.5 L8.8,3.5 L8.8,6.3 L10.5,6.3 L8,9 L5.5,6.3 L7.2,6.3 Z" fill="#3c3c3c"/></svg></div><div class="cell" style="left:366px;top:648px"><div class="th"></div><div class="ti">Jai Ho</div><svg class="cl" viewBox="0 0 16 11"><defs><linearGradient id="clg" x1="0" y1="0" x2="0" y2="1"><stop offset="0" stop-color="#e4e4e4"/><stop offset="1" stop-color="#8c8c8c"/></linearGradient></defs><path d="M3,10.5 C0.5,10.5 0,8 1,6.5 C2,5.5 3,5.5 4,5.5 C4,2.5 6,1 8.5,1 C11,1 12.5,3 12.5,5 C14.5,5 16,6.5 15.8,8.5 C15.6,10 14.5,10.5 13,10.5 Z" fill="url(#clg)"/><path d="M7.2,3.5 L8.8,3.5 L8.8,6.3 L10.5,6.3 L8,9 L5.5,6.3 L7.2,6.3 Z" fill="#3c3c3c"/></svg></div><div class="cell" style="left:549px;top:648px"><div class="th"><svg width="47" height="47"><circle cx="30" cy="6" r="3" fill="none" stroke="#20e040" stroke-width="1.3"/></svg></div><div class="ti">Catch a Grenade</div><svg class="cl" viewBox="0 0 16 11"><defs><linearGradient id="clg" x1="0" y1="0" x2="0" y2="1"><stop offset="0" stop-color="#e4e4e4"/><stop offset="1" stop-color="#8c8c8c"/></linearGradient></defs><path d="M3,10.5 C0.5,10.5 0,8 1,6.5 C2,5.5 3,5.5 4,5.5 C4,2.5 6,1 8.5,1 C11,1 12.5,3 12.5,5 C14.5,5 16,6.5 15.8,8.5 C15.6,10 14.5,10.5 13,10.5 Z" fill="url(#clg)"/><path d="M7.2,3.5 L8.8,3.5 L8.8,6.3 L10.5,6.3 L8,9 L5.5,6.3 L7.2,6.3 Z" fill="#3c3c3c"/></svg></div></div><div class="a" style="left:1112px;top:120px;width:19px;height:663px;background:#ededed;border-left:1px solid #e0e0e0"></div><svg class="a" style="left:1116px;top:125px" width="10" height="7"><path d="M1,5.5 L5,1.5 L9,5.5 Z" fill="#303030"/></svg><div class="a" style="left:1114px;top:140px;width:15px;height:490px;border:1px solid #a8a8a8;border-radius:2px;background:linear-gradient(90deg,#f8f8f8,#e8e8e8 40%,#d0d0d0 80%,#c8c8c8)"></div><div class="a" style="left:1117px;top:381px;width:8px;height:1px;background:#707070"></div><div class="a" style="left:1117px;top:384px;width:8px;height:1px;background:#707070"></div><div class="a" style="left:1117px;top:387px;width:8px;height:1px;background:#707070"></div><svg class="a" style="left:1116px;top:770px" width="10" height="7"><path d="M1,1.5 L5,5.5 L9,1.5 Z" fill="#303030"/></svg><div class="a" style="left:4px;top:784px;width:1127px;height:20px;background:#c1c7d7"></div><div class="a" style="left:4px;top:804px;width:1127px;height:7px;background:linear-gradient(#a8aebc,#c4cad8 60%,#d5dcf0)"></div><div class="a" style="left:4px;top:811px;width:1127px;height:31px;background:#d5dcf0"></div><div class="a" style="left:7px;top:815px;width:85px;height:23px;border:1px solid #7c9c7c;border-bottom:none;border-radius:3px 3px 0 0;background:linear-gradient(#fbfff4,#e8fad8)"></div><div class="a" style="left:15px;top:818px;width:17px;height:17px;border-radius:3px;background:linear-gradient(135deg,#c0dcf8,#5c98e0)"></div><div class="t" style="left:35px;top:822.01px;font-size:12.10px;transform:scaleX(0.8929);transform-origin:0 0;color:#1c3c2c">QuickText</div><div class="a" style="left:92px;top:816px;width:96px;height:22px;border:1px solid #a8b0c4;border-bottom:none;border-left:none;border-radius:0 3px 0 0;background:#c8cee0"></div><div class="a" style="left:102px;top:818px;width:17px;height:17px;border-radius:3px;background:linear-gradient(135deg,#c0dcf8,#5c98e0)"></div><div class="t" style="left:120px;top:822.01px;font-size:12.10px;transform:scaleX(0.8929);transform-origin:0 0;color:#2c3c5c">QuickShape</div><div class="a" style="left:188px;top:816px;width:93px;height:22px;border:1px solid #a8b0c4;border-bottom:none;border-left:none;border-radius:0 3px 0 0;background:#c8cee0"></div><div class="a" style="left:198px;top:818px;width:17px;height:17px;border-radius:3px;background:linear-gradient(135deg,#c0dcf8,#5c98e0)"></div><div class="t" style="left:216px;top:822.01px;font-size:12.10px;transform:scaleX(0.8929);transform-origin:0 0;color:#2c3c5c">QuickTrace</div><div class="a" style="left:281px;top:816px;width:89px;height:22px;border:1px solid #a8b0c4;border-bottom:none;border-left:none;border-radius:0 3px 0 0;background:#c8cee0"></div><div class="a" style="left:291px;top:818px;width:17px;height:17px;border-radius:3px;background:linear-gradient(135deg,#c0dcf8,#5c98e0)"></div><div class="t" style="left:309px;top:822.01px;font-size:12.10px;transform:scaleX(0.8929);transform-origin:0 0;color:#2c3c5c">QuickDMX</div><div class="a" style="left:370px;top:816px;width:104px;height:22px;border:1px solid #a8b0c4;border-bottom:none;border-left:none;border-radius:0 3px 0 0;background:#c8cee0"></div><div class="a" style="left:380px;top:818px;width:17px;height:17px;border-radius:3px;background:linear-gradient(135deg,#c0dcf8,#5c98e0)"></div><div class="t" style="left:398px;top:822.01px;font-size:12.10px;transform:scaleX(0.8929);transform-origin:0 0;color:#2c3c5c">QuickTimeline</div><div class="a" style="left:474px;top:816px;width:102px;height:22px;border:1px solid #a8b0c4;border-bottom:none;border-left:none;border-radius:0 3px 0 0;background:#c8cee0"></div><div class="a" style="left:484px;top:818px;width:17px;height:17px;border-radius:3px;background:linear-gradient(135deg,#c0dcf8,#5c98e0)"></div><div class="t" style="left:502px;top:822.01px;font-size:12.10px;transform:scaleX(0.8929);transform-origin:0 0;color:#2c3c5c">QuickCapture</div><div class="a" style="left:576px;top:816px;width:78px;height:22px;border:1px solid #a8b0c4;border-bottom:none;border-left:none;border-radius:0 3px 0 0;background:#c8cee0"></div><div class="a" style="left:586px;top:818px;width:17px;height:17px;border-radius:3px;background:linear-gradient(135deg,#c0dcf8,#5c98e0)"></div><div class="t" style="left:604px;top:822.01px;font-size:12.10px;transform:scaleX(0.8929);transform-origin:0 0;color:#2c3c5c">QuickFX</div><div class="a" style="left:654px;top:816px;width:92px;height:22px;border:1px solid #a8b0c4;border-bottom:none;border-left:none;border-radius:0 3px 0 0;background:#c8cee0"></div><div class="a" style="left:664px;top:818px;width:17px;height:17px;border-radius:3px;background:linear-gradient(135deg,#c0dcf8,#5c98e0)"></div><div class="t" style="left:682px;top:822.01px;font-size:12.10px;transform:scaleX(0.8929);transform-origin:0 0;color:#2c3c5c">Workspace</div><div class="t" style="left:17px;top:820.02px;font-size:14.56px;transform:scaleX(0.8929);transform-origin:0 0;font-weight:bold;color:#000">T</div><svg class="a" style="left:103px;top:818px" width="17" height="17"><circle cx="5.5" cy="5.5" r="3.2" fill="#f0e020"/><circle cx="11.5" cy="5.5" r="3.2" fill="#30c030"/><circle cx="5.5" cy="11.5" r="3.2" fill="#20d0e0"/><circle cx="11.5" cy="11.5" r="3.2" fill="#e02020"/><circle cx="8.5" cy="8.5" r="2" fill="#303030"/></svg><svg class="a" style="left:199px;top:818px" width="17" height="17"><path d="M3,15 L5,10 L13,2 L15,4 L7,12 Z" fill="#fff" stroke="#202020" stroke-width="1"/></svg><svg class="a" style="left:292px;top:818px" width="17" height="17"><circle cx="8.5" cy="7" r="4.5" fill="#fff8c0" stroke="#303030"/><rect x="6" y="11" width="5" height="4" fill="#303030"/></svg><svg class="a" style="left:381px;top:818px" width="17" height="17"><rect x="3" y="3" width="11" height="3" fill="#20c090" stroke="#000" stroke-width="0.6"/><rect x="3" y="7" width="11" height="3" fill="#20c090" stroke="#000" stroke-width="0.6"/><rect x="3" y="11" width="11" height="3" fill="#20c090" stroke="#000" stroke-width="0.6"/></svg><svg class="a" style="left:485px;top:818px" width="17" height="17"><rect x="2" y="5" width="13" height="9" rx="1" fill="#e8e8e8" stroke="#000" stroke-width="1.2"/><circle cx="8.5" cy="9.5" r="3" fill="#fff" stroke="#000" stroke-width="1.2"/><rect x="5" y="3" width="5" height="2" fill="#000"/></svg><div class="t" style="left:588px;top:821.85px;font-size:12.88px;transform:scaleX(0.8929);transform-origin:0 0;font-weight:bold;color:#101010">FX</div><svg class="a" style="left:665px;top:818px" width="17" height="17"><path d="M4,3 L4,13 L7,10 L10,15 L12,14 L9,9 L13,9 Z" fill="#fff" stroke="#000" stroke-width="1"/><circle cx="5" cy="5" r="2.5" fill="#30d030"/></svg><div class="btn" style="left:1111px;top:812px;width:20px;height:20px;border-radius:3px"></div><svg class="a" style="left:1116px;top:818px" width="10" height="7"><path d="M1,5.5 L5,1 L9,5.5 Z" fill="#101010"/></svg><div class="a" style="left:1130px;top:835px;width:1px;height:6px;background:#8090b0"></div><div class="a" style="left:4px;top:842px;width:1414px;height:22px;background:#fff"></div><div class="a" style="left:0px;top:864px;width:1422px;height:4px;background:linear-gradient(#eaeef9,#c8d2ea)"></div><div class="a" style="left:0px;top:868px;width:1422px;height:1px;background:#8090b4"></div><div class="a" style="left:977px;top:843px;width:1px;height:19px;background:#c8cede"></div><svg class="a" style="left:979px;top:845px" width="17" height="15"><rect x="0" y="0" width="17" height="15" fill="#b8c0d0"/><rect x="7" y="1" width="9" height="7" fill="#303030"/><rect x="1" y="6" width="10" height="8" fill="#3070d0"/></svg><div class="t" style="left:997.5px;top:847.02px;font-size:12.32px;transform:scaleX(0.8929);transform-origin:0 0;">FB4 1013</div><div class="a" style="left:1143px;top:843px;width:54px;height:19px;background:#fbee86"></div><div class="t" style="left:1152px;top:847.01px;font-size:11.98px;transform:scaleX(0.8929);transform-origin:0 0;">52 FPS</div><div class="a" style="left:1197px;top:843px;width:2px;height:19px;background:#d5dcf0"></div><div class="a" style="left:1199px;top:843px;width:17px;height:19px;background:#b0b8c8"></div><svg class="a" style="left:1199px;top:845px" width="17" height="15"><path d="M8.5,1 L16,14 L1,14 Z" fill="#f0e000" stroke="#202000"/><circle cx="8.5" cy="9.5" r="2" fill="#000"/></svg><div class="t" style="left:1218.3px;top:847.75px;font-size:11.87px;transform:scaleX(0.8929);transform-origin:0 0;">Projector 2: FB3 64070</div><div class="a" style="left:1363px;top:843px;width:54px;height:19px;background:#8cf7c1"></div><div class="t" style="left:1373px;top:847.01px;font-size:11.98px;transform:scaleX(0.8929);transform-origin:0 0;">77 FPS</div><div class="a" style="left:1131px;top:94px;width:287px;height:748px;background:#d5dcf0"></div><div class="a" style="left:1136px;top:96px;width:281px;height:218px;background:#000"></div><svg class="a" style="left:1136px;top:96px" width="281" height="218">
<defs>
<linearGradient id="r1" x1="0" y1="0" x2="1" y2="0"><stop offset="0.3" stop-color="#a8e020"/><stop offset="0.6" stop-color="#e82090"/></linearGradient>
<linearGradient id="r2" x1="0" y1="0" x2="1" y2="1"><stop offset="0.35" stop-color="#e82090"/><stop offset="0.6" stop-color="#a8e020"/></linearGradient>
<linearGradient id="r3" x1="1" y1="0" x2="0" y2="1"><stop offset="0.35" stop-color="#a8e020"/><stop offset="0.6" stop-color="#e82090"/></linearGradient>
<linearGradient id="r4" x1="0" y1="1" x2="1" y2="0"><stop offset="0.35" stop-color="#e82090"/><stop offset="0.6" stop-color="#a8e020"/></linearGradient>
</defs>
<g fill="none" stroke-width="1.1">
<ellipse cx="149.9" cy="77.8" rx="36" ry="27.5" stroke="#a8e018"/><ellipse cx="149.9" cy="77.8" rx="36" ry="27.5" stroke="#f01890" pathLength="400" stroke-dasharray="100 100" stroke-dashoffset="-50"/>
<ellipse cx="100.5" cy="102.9" rx="35.5" ry="27.6" stroke="#a8e018"/><ellipse cx="100.5" cy="102.9" rx="35.5" ry="27.6" stroke="#f01890" pathLength="400" stroke-dasharray="100 100" stroke-dashoffset="50"/>
<ellipse cx="181.3" cy="115.9" rx="35.5" ry="27.8" stroke="#a8e018"/><ellipse cx="181.3" cy="115.9" rx="35.5" ry="27.8" stroke="#f01890" pathLength="400" stroke-dasharray="100 100" stroke-dashoffset="50"/>
<ellipse cx="132.2" cy="140.9" rx="36" ry="27.8" stroke="#a8e018"/><ellipse cx="132.2" cy="140.9" rx="36" ry="27.8" stroke="#f01890" pathLength="400" stroke-dasharray="100 100" stroke-dashoffset="-50"/>
</g>
<rect x="237.5" y="6.5" width="11" height="11" fill="none" stroke="#707070"/><rect x="240.5" y="9.5" width="11" height="10" fill="none" stroke="#707070"/>
<rect x="261" y="5" width="4" height="4" fill="#808080"/><rect x="266" y="5" width="4" height="4" fill="#808080"/><rect x="271" y="5" width="4" height="4" fill="#808080"/><rect x="261" y="10" width="4" height="4" fill="#808080"/><rect x="266" y="10" width="4" height="4" fill="#808080"/><rect x="271" y="10" width="4" height="4" fill="#808080"/><rect x="261" y="15" width="4" height="4" fill="#808080"/><rect x="266" y="15" width="4" height="4" fill="#808080"/><rect x="271" y="15" width="4" height="4" fill="#808080"/></svg><div class="a" style="left:1136px;top:314px;width:281px;height:7px;background:linear-gradient(#b8c0d0,#a4acc0 40%,#d5dcf0)"></div><div class="a" style="left:1137px;top:324px;width:90px;height:24px;border:1px solid #90b890;border-bottom:none;border-radius:3px 3px 0 0;background:linear-gradient(#fcfff8,#e4f8d8)"></div><svg class="a" style="left:1146px;top:328px" width="14" height="14"><rect x="3.5" y="3.5" width="7" height="7" fill="none" stroke="#000"/><path d="M7,0 L7,14 M0,7 L14,7" stroke="#000"/><rect x="5" y="5" width="4" height="4" fill="#f00000"/></svg><div class="t" style="left:1162.8px;top:331.00px;font-size:11.76px;transform:scaleX(0.8929);transform-origin:0 0;color:#1c3c2c">Live Control</div><div class="a" style="left:1227px;top:325px;width:62px;height:23px;border:1px solid #a8b0c4;border-bottom:none;border-left:none;border-radius:0 3px 0 0;background:#c8d0e4"></div><svg class="a" style="left:1238px;top:329px" width="13" height="13"><path d="M1,1 L12,1 L12,4 L10,3 L5,3 L8.5,6.5 L5,10 L10,10 L12,9 L12,12 L1,12 L1,11 L5,6.5 L1,2 Z" fill="#20d020" stroke="#004000" stroke-width="0.8"/></svg><div class="t" style="left:1253px;top:330.98px;font-size:12.54px;transform:scaleX(0.8929);transform-origin:0 0;color:#304870">Effect</div><div class="a" style="left:1135px;top:347px;width:283px;height:495px;border:1px solid #a0acc8;border-top:2px solid #a8b4cc;background:#d5dcf0"></div><div class="a" style="left:1136px;top:349px;width:281px;height:1px;background:#f4f8ff"></div><div class="btng" style="left:1139px;top:353px;width:81px;height:25px;border-radius:4px"></div><svg class="a" style="left:1144px;top:358px" width="15" height="15"><defs><radialGradient id="mg" cx="0.4" cy="0.4" r="0.7"><stop offset="0" stop-color="#f0d040"/><stop offset="0.5" stop-color="#3080d0"/><stop offset="1" stop-color="#102050"/></radialGradient></defs><ellipse cx="7.5" cy="7.5" rx="6" ry="7" fill="url(#mg)" transform="rotate(30 7.5 7.5)"/></svg><div class="t" style="left:1163px;top:360.98px;font-size:12.54px;transform:scaleX(0.8929);transform-origin:0 0;">Master</div><div class="btn" style="left:1220px;top:353px;width:81px;height:25px;border-radius:4px"></div><div class="a" style="left:1225px;top:358px;width:15px;height:15px;background:linear-gradient(135deg,#203858,#4070c0);border-bottom:3px solid #4090f0"></div><div class="t" style="left:1243px;top:360.98px;font-size:12.54px;transform:scaleX(0.8929);transform-origin:0 0;">Cue</div><div class="btn" style="left:1350px;top:353px;width:64px;height:25px;border-radius:4px"></div><svg class="a" style="left:1356px;top:358px" width="14" height="14"><rect x="3.5" y="3.5" width="7" height="7" fill="none" stroke="#707070"/><path d="M7,0 L7,14 M0,7 L14,7" stroke="#000"/><circle cx="7" cy="7" r="2" fill="#f00000"/></svg><div class="t" style="left:1375px;top:360.98px;font-size:12.54px;transform:scaleX(0.8929);transform-origin:0 0;">Reset</div><div class="a" style="left:1404px;top:379px;width:10px;height:341px;background:#3f7c7a"></div><div class="a" style="left:1404px;top:720px;width:10px;height:118px;background:#686c78"></div><div class="hdr" style="top:379px"><i></i><span>Size</span></div><div class="a" style="left:1141px;top:397px;width:261px;height:61px;border:1px solid #c0c8dc;border-left:1px solid #fafcff;border-bottom:1px solid #fafcff;border-top:none;background:#d5dcf0"></div><div class="sfr" style="left:1147px;top:400px;width:247px;height:38px"></div><svg class="a" style="left:1152px;top:413px" width="10" height="11"><path d="M1,1 L3,1 L3,10 L1,10 Z M3,5.5 L9,1 L9,10 Z" fill="#000"/></svg><svg class="a" style="left:1380px;top:413px" width="10" height="11"><path d="M9,1 L7,1 L7,10 L9,10 Z M7,5.5 L1,1 L1,10 Z" fill="#000"/></svg><div class="a" style="left:1172px;top:418px;width:198px;height:2px;background:#a8b0c0"></div><div class="a" style="left:1194px;top:403px;width:171px;height:12px;background:linear-gradient(90deg,#000 0%,#202020 20%,#606060 50%,#9c9c9c 75%,#c8c8c8 100%)"></div><div class="a" style="left:1243px;top:407px;width:4px;height:4px;background:#30b8f0"></div><svg class="a" style="left:1258px;top:404px" width="42" height="10"><path d="M0,5 L32,5 M28,1 L36,5 L28,9" stroke="#30b8f0" stroke-width="1.4" fill="none" stroke-dasharray="3,1"/><path d="M28,1 L36,5 L28,9 Z" fill="#30b8f0"/></svg><div class="a" style="left:1300px;top:404px;width:10px;height:10px;background:#30b8f0;border:1px solid #106090"></div><div class="a" style="left:1334px;top:400px;width:31px;height:18px;border:1px solid #707888;background:linear-gradient(90deg,#687080,#9ca2b0 40%,#d0d4e0 48%,#dce0ec 52%,#e4e8f2 90%,#b8bece)"></div><div class="a" style="left:1349px;top:400px;width:1px;height:18px;background:#a0a6b8"></div><div class="a" style="left:1194px;top:422px;width:171px;height:12px;background:linear-gradient(90deg,#000 0%,#202020 20%,#606060 50%,#9c9c9c 75%,#c8c8c8 100%)"></div><div class="a" style="left:1243px;top:426px;width:4px;height:4px;background:#30b8f0"></div><svg class="a" style="left:1258px;top:423px" width="42" height="10"><path d="M0,5 L32,5 M28,1 L36,5 L28,9" stroke="#30b8f0" stroke-width="1.4" fill="none" stroke-dasharray="3,1"/><path d="M28,1 L36,5 L28,9 Z" fill="#30b8f0"/></svg><div class="a" style="left:1300px;top:423px;width:10px;height:10px;background:#30b8f0;border:1px solid #106090"></div><div class="a" style="left:1334px;top:419px;width:31px;height:18px;border:1px solid #707888;background:linear-gradient(90deg,#687080,#9ca2b0 40%,#d0d4e0 48%,#dce0ec 52%,#e4e8f2 90%,#b8bece)"></div><div class="a" style="left:1349px;top:419px;width:1px;height:18px;background:#a0a6b8"></div><div class="btng" style="left:1291px;top:439px;width:81px;height:16px;border-radius:3px"></div><div class="t" style="left:1231.0px;width:200px;text-align:center;top:441.00px;font-size:11.76px;transform:scaleX(0.8929);transform-origin:50% 0;">Lock XY</div><div class="hdr" style="top:460px"><i></i><span>Position and Rotation</span></div><div class="a" style="left:1141px;top:478px;width:261px;height:182px;border:1px solid #c0c8dc;border-left:1px solid #fafcff;border-bottom:1px solid #fafcff;border-top:none;background:#d5dcf0"></div><svg class="a" style="left:1146px;top:482px" width="137" height="137"><rect x="0" y="0" width="137" height="137" fill="#686c76"/><rect x="5" y="5" width="127" height="127" fill="#fff"/><path d="M13.5,6 L13.5,131 M6,13.5 L131,13.5" stroke="#62666e" stroke-width="1"/><path d="M21.5,6 L21.5,131 M6,21.5 L131,21.5" stroke="#62666e" stroke-width="1"/><path d="M29.5,6 L29.5,131 M6,29.5 L131,29.5" stroke="#62666e" stroke-width="1"/><path d="M37.5,6 L37.5,131 M6,37.5 L131,37.5" stroke="#62666e" stroke-width="1"/><path d="M45.5,6 L45.5,131 M6,45.5 L131,45.5" stroke="#62666e" stroke-width="1"/><path d="M53.5,6 L53.5,131 M6,53.5 L131,53.5" stroke="#62666e" stroke-width="1"/><path d="M61.5,6 L61.5,131 M6,61.5 L131,61.5" stroke="#62666e" stroke-width="1"/><path d="M69.5,6 L69.5,131 M6,69.5 L131,69.5" stroke="#3c3e46" stroke-width="1"/><path d="M77.5,6 L77.5,131 M6,77.5 L131,77.5" stroke="#62666e" stroke-width="1"/><path d="M85.5,6 L85.5,131 M6,85.5 L131,85.5" stroke="#62666e" stroke-width="1"/><path d="M93.5,6 L93.5,131 M6,93.5 L131,93.5" stroke="#62666e" stroke-width="1"/><path d="M101.5,6 L101.5,131 M6,101.5 L131,101.5" stroke="#62666e" stroke-width="1"/><path d="M109.5,6 L109.5,131 M6,109.5 L131,109.5" stroke="#62666e" stroke-width="1"/><path d="M117.5,6 L117.5,131 M6,117.5 L131,117.5" stroke="#62666e" stroke-width="1"/><path d="M125.5,6 L125.5,131 M6,125.5 L131,125.5" stroke="#62666e" stroke-width="1"/><path d="M69.5,66 L73,69.5 L69.5,73 L66,69.5 Z" fill="#fff" stroke="#505050"/></svg><div class="t" style="left:1286px;top:497.97px;font-size:13.44px;transform:scaleX(0.8929);transform-origin:0 0;">X</div><svg class="a" style="left:1301.4px;top:484.9px" width="40" height="40"><defs><linearGradient id="kb" x1="0.2" y1="0.1" x2="0.8" y2="0.9"><stop offset="0" stop-color="#f0f0f0"/><stop offset="0.45" stop-color="#c8c8c8"/><stop offset="1" stop-color="#303030"/></linearGradient></defs><circle cx="20.00" cy="1.20" r="1.15" fill="#000"/><circle cx="10.60" cy="36.28" r="1.15" fill="#000"/><circle cx="3.72" cy="29.40" r="1.15" fill="#000"/><circle cx="1.20" cy="20.00" r="1.15" fill="#000"/><circle cx="3.72" cy="10.60" r="1.15" fill="#000"/><circle cx="10.60" cy="3.72" r="1.15" fill="#000"/><circle cx="29.40" cy="3.72" r="1.15" fill="#000"/><circle cx="36.28" cy="10.60" r="1.15" fill="#000"/><circle cx="38.80" cy="20.00" r="1.15" fill="#000"/><circle cx="36.28" cy="29.40" r="1.15" fill="#000"/><circle cx="29.40" cy="36.28" r="1.15" fill="#000"/><circle cx="20" cy="20" r="17.2" fill="#fff" stroke="url(#kb)" stroke-width="1.3"/><path d="M19.4,2 L20.6,2 L21.1,12.5 L18.9,12.5 Z" fill="#f01010"/></svg><svg class="a" style="left:1349.6px;top:484.9px" width="40" height="40"><defs><linearGradient id="kb" x1="0.2" y1="0.1" x2="0.8" y2="0.9"><stop offset="0" stop-color="#f0f0f0"/><stop offset="0.45" stop-color="#c8c8c8"/><stop offset="1" stop-color="#303030"/></linearGradient></defs><circle cx="20.00" cy="1.20" r="1.15" fill="#000"/><circle cx="10.60" cy="36.28" r="1.15" fill="#000"/><circle cx="3.72" cy="29.40" r="1.15" fill="#000"/><circle cx="1.20" cy="20.00" r="1.15" fill="#000"/><circle cx="3.72" cy="10.60" r="1.15" fill="#000"/><circle cx="10.60" cy="3.72" r="1.15" fill="#000"/><circle cx="29.40" cy="3.72" r="1.15" fill="#000"/><circle cx="36.28" cy="10.60" r="1.15" fill="#000"/><circle cx="38.80" cy="20.00" r="1.15" fill="#000"/><circle cx="36.28" cy="29.40" r="1.15" fill="#000"/><circle cx="29.40" cy="36.28" r="1.15" fill="#000"/><circle cx="20" cy="20" r="17.2" fill="#fff" stroke="url(#kb)" stroke-width="1.3"/><path d="M19.4,2 L20.6,2 L21.1,12.5 L18.9,12.5 Z" fill="#f01010"/></svg><div class="t" style="left:1286px;top:545.97px;font-size:13.44px;transform:scaleX(0.8929);transform-origin:0 0;">Y</div><svg class="a" style="left:1301.4px;top:532.9px" width="40" height="40"><defs><linearGradient id="kb" x1="0.2" y1="0.1" x2="0.8" y2="0.9"><stop offset="0" stop-color="#f0f0f0"/><stop offset="0.45" stop-color="#c8c8c8"/><stop offset="1" stop-color="#303030"/></linearGradient></defs><circle cx="20.00" cy="1.20" r="1.15" fill="#000"/><circle cx="10.60" cy="36.28" r="1.15" fill="#000"/><circle cx="3.72" cy="29.40" r="1.15" fill="#000"/><circle cx="1.20" cy="20.00" r="1.15" fill="#000"/><circle cx="3.72" cy="10.60" r="1.15" fill="#000"/><circle cx="10.60" cy="3.72" r="1.15" fill="#000"/><circle cx="29.40" cy="3.72" r="1.15" fill="#000"/><circle cx="36.28" cy="10.60" r="1.15" fill="#000"/><circle cx="38.80" cy="20.00" r="1.15" fill="#000"/><circle cx="36.28" cy="29.40" r="1.15" fill="#000"/><circle cx="29.40" cy="36.28" r="1.15" fill="#000"/><circle cx="20" cy="20" r="17.2" fill="#fff" stroke="url(#kb)" stroke-width="1.3"/><path d="M19.4,2 L20.6,2 L21.1,12.5 L18.9,12.5 Z" fill="#10b040"/></svg><svg class="a" style="left:1349.6px;top:532.9px" width="40" height="40"><defs><linearGradient id="kb" x1="0.2" y1="0.1" x2="0.8" y2="0.9"><stop offset="0" stop-color="#f0f0f0"/><stop offset="0.45" stop-color="#c8c8c8"/><stop offset="1" stop-color="#303030"/></linearGradient></defs><circle cx="20.00" cy="1.20" r="1.15" fill="#000"/><circle cx="10.60" cy="36.28" r="1.15" fill="#000"/><circle cx="3.72" cy="29.40" r="1.15" fill="#000"/><circle cx="1.20" cy="20.00" r="1.15" fill="#000"/><circle cx="3.72" cy="10.60" r="1.15" fill="#000"/><circle cx="10.60" cy="3.72" r="1.15" fill="#000"/><circle cx="29.40" cy="3.72" r="1.15" fill="#000"/><circle cx="36.28" cy="10.60" r="1.15" fill="#000"/><circle cx="38.80" cy="20.00" r="1.15" fill="#000"/><circle cx="36.28" cy="29.40" r="1.15" fill="#000"/><circle cx="29.40" cy="36.28" r="1.15" fill="#000"/><circle cx="20" cy="20" r="17.2" fill="#fff" stroke="url(#kb)" stroke-width="1.3"/><path d="M19.4,2 L20.6,2 L21.1,12.5 L18.9,12.5 Z" fill="#10b040"/></svg><div class="t" style="left:1286px;top:593.97px;font-size:13.44px;transform:scaleX(0.8929);transform-origin:0 0;">Z</div><svg class="a" style="left:1301.4px;top:580.9px" width="40" height="40"><defs><linearGradient id="kb" x1="0.2" y1="0.1" x2="0.8" y2="0.9"><stop offset="0" stop-color="#f0f0f0"/><stop offset="0.45" stop-color="#c8c8c8"/><stop offset="1" stop-color="#303030"/></linearGradient></defs><circle cx="20.00" cy="1.20" r="1.15" fill="#000"/><circle cx="10.60" cy="36.28" r="1.15" fill="#000"/><circle cx="3.72" cy="29.40" r="1.15" fill="#000"/><circle cx="1.20" cy="20.00" r="1.15" fill="#000"/><circle cx="3.72" cy="10.60" r="1.15" fill="#000"/><circle cx="10.60" cy="3.72" r="1.15" fill="#000"/><circle cx="29.40" cy="3.72" r="1.15" fill="#000"/><circle cx="36.28" cy="10.60" r="1.15" fill="#000"/><circle cx="38.80" cy="20.00" r="1.15" fill="#000"/><circle cx="36.28" cy="29.40" r="1.15" fill="#000"/><circle cx="29.40" cy="36.28" r="1.15" fill="#000"/><circle cx="20" cy="20" r="17.2" fill="#fff" stroke="url(#kb)" stroke-width="1.3"/><path d="M19.4,2 L20.6,2 L21.1,12.5 L18.9,12.5 Z" fill="#1010e0"/></svg><svg class="a" style="left:1349.6px;top:580.9px" width="40" height="40"><defs><linearGradient id="kb" x1="0.2" y1="0.1" x2="0.8" y2="0.9"><stop offset="0" stop-color="#f0f0f0"/><stop offset="0.45" stop-color="#c8c8c8"/><stop offset="1" stop-color="#303030"/></linearGradient></defs><circle cx="20.00" cy="1.20" r="1.15" fill="#000"/><circle cx="10.60" cy="36.28" r="1.15" fill="#000"/><circle cx="3.72" cy="29.40" r="1.15" fill="#000"/><circle cx="1.20" cy="20.00" r="1.15" fill="#000"/><circle cx="3.72" cy="10.60" r="1.15" fill="#000"/><circle cx="10.60" cy="3.72" r="1.15" fill="#000"/><circle cx="29.40" cy="3.72" r="1.15" fill="#000"/><circle cx="36.28" cy="10.60" r="1.15" fill="#000"/><circle cx="38.80" cy="20.00" r="1.15" fill="#000"/><circle cx="36.28" cy="29.40" r="1.15" fill="#000"/><circle cx="29.40" cy="36.28" r="1.15" fill="#000"/><circle cx="20" cy="20" r="17.2" fill="#fff" stroke="url(#kb)" stroke-width="1.3"/><path d="M19.4,2 L20.6,2 L21.1,12.5 L18.9,12.5 Z" fill="#1010e0"/></svg><div class="btn" style="left:1145px;top:632px;width:140px;height:25px;border-radius:3px"></div><svg class="a" style="left:1152px;top:638px" width="13" height="13"><path d="M6.5,0 L6.5,13 M0,6.5 L13,6.5" stroke="#000"/><circle cx="6.5" cy="6.5" r="2" fill="#f00000"/></svg><div class="t" style="left:1170px;top:638.95px;font-size:10.75px;transform:scaleX(0.8929);transform-origin:0 0;">Reset position</div><div class="btn" style="left:1287px;top:632px;width:110px;height:25px;border-radius:3px"></div><svg class="a" style="left:1294px;top:638px" width="13" height="13"><path d="M6.5,0 L6.5,13 M0,6.5 L13,6.5" stroke="#000"/><circle cx="6.5" cy="6.5" r="2" fill="#f00000"/></svg><div class="t" style="left:1312px;top:638.95px;font-size:10.75px;transform:scaleX(0.8929);transform-origin:0 0;">Reset rotation</div><div class="hdr" style="top:663px"><i></i><span>Color</span></div><div class="a" style="left:1141px;top:682px;width:261px;height:136px;border:1px solid #c0c8dc;border-left:1px solid #fafcff;border-bottom:1px solid #fafcff;border-top:none;background:#d5dcf0"></div><div class="t" style="left:1169.5px;width:200px;text-align:center;top:687.98px;font-size:12.54px;transform:scaleX(0.8929);transform-origin:50% 0;">Color</div><div class="sfr" style="left:1147px;top:702px;width:247px;height:24px"></div><svg class="a" style="left:1152px;top:708px" width="10" height="11"><path d="M1,1 L3,1 L3,10 L1,10 Z M3,5.5 L9,1 L9,10 Z" fill="#000"/></svg><svg class="a" style="left:1380px;top:708px" width="10" height="11"><path d="M9,1 L7,1 L7,10 L9,10 Z M7,5.5 L1,1 L1,10 Z" fill="#000"/></svg><div class="a" style="left:1210px;top:707px;width:121px;height:12px;background:linear-gradient(90deg,#ff0000,#ffa000 12%,#f0f000 20%,#00ff00 37%,#00f0f0 50%,#0000ff 67%,#ff00ff 85%,#ff0040 95%,#ff0000)"></div><div class="a" style="left:1331px;top:707px;width:19px;height:12px;background:#fff"></div><div class="a" style="left:1179px;top:703px;width:31px;height:23px;border:1px solid #707888;background:linear-gradient(90deg,#687080,#9ca2b0 40%,#d0d4e0 48%,#dce0ec 52%,#e4e8f2 90%,#b8bece)"></div><div class="a" style="left:1194px;top:703px;width:1px;height:23px;background:#a0a6b8"></div><div class="t" style="left:1181px;top:708.97px;font-size:11.20px;transform:scaleX(0.8929);transform-origin:0 0;letter-spacing:-0.3px">Norm.</div><div class="t" style="left:1169.5px;width:200px;text-align:center;top:730.99px;font-size:11.65px;transform:scaleX(0.8929);transform-origin:50% 0;">Brightness: 100%</div><div class="sfr" style="left:1147px;top:745px;width:247px;height:24px"></div><svg class="a" style="left:1152px;top:751px" width="10" height="11"><path d="M1,1 L3,1 L3,10 L1,10 Z M3,5.5 L9,1 L9,10 Z" fill="#000"/></svg><svg class="a" style="left:1380px;top:751px" width="10" height="11"><path d="M9,1 L7,1 L7,10 L9,10 Z M7,5.5 L1,1 L1,10 Z" fill="#000"/></svg><div class="a" style="left:1194px;top:750px;width:141px;height:12px;background:linear-gradient(90deg,#1a1a1a,#707070 50%,#c4c4c4)"></div><div class="a" style="left:1334px;top:746px;width:31px;height:23px;border:1px solid #707888;background:linear-gradient(90deg,#687080,#9ca2b0 40%,#d0d4e0 48%,#dce0ec 52%,#e4e8f2 90%,#b8bece)"></div><div class="a" style="left:1349px;top:746px;width:1px;height:23px;background:#a0a6b8"></div><div class="t" style="left:1169.5px;width:200px;text-align:center;top:775.99px;font-size:11.65px;transform:scaleX(0.8929);transform-origin:50% 0;">Visible points: 100%</div><div class="sfr" style="left:1147px;top:790px;width:247px;height:24px"></div><svg class="a" style="left:1152px;top:796px" width="10" height="11"><path d="M1,1 L3,1 L3,10 L1,10 Z M3,5.5 L9,1 L9,10 Z" fill="#000"/></svg><svg class="a" style="left:1380px;top:796px" width="10" height="11"><path d="M9,1 L7,1 L7,10 L9,10 Z M7,5.5 L1,1 L1,10 Z" fill="#000"/></svg><svg class="a" style="left:1194px;top:795px" width="141" height="13"><rect width="141" height="13" fill="#fff"/><path d="M0,0 L141,0 L0,13 Z" fill="#000"/></svg><div class="a" style="left:1334px;top:791px;width:31px;height:23px;border:1px solid #707888;background:linear-gradient(90deg,#687080,#9ca2b0 40%,#d0d4e0 48%,#dce0ec 52%,#e4e8f2 90%,#b8bece)"></div><div class="a" style="left:1349px;top:791px;width:1px;height:23px;background:#a0a6b8"></div><div class="hdr" style="top:821px"><i></i><span>Playback</span></div></body></html>
